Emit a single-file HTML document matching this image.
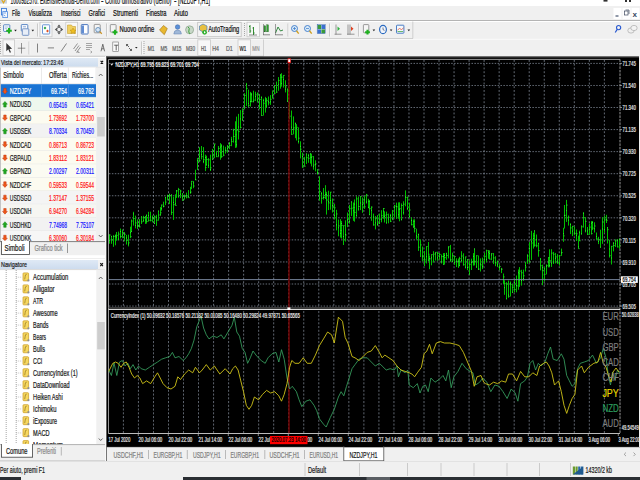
<!DOCTYPE html><html><head><meta charset="utf-8"><title>MetaTrader 4</title><style>html,body{margin:0;padding:0;width:640px;height:480px;overflow:hidden;background:#f0f0f0}svg{display:block}text{font-family:"Liberation Sans",sans-serif}</style></head><body>
<svg width="640" height="480" viewBox="0 0 640 480">
<rect x="0" y="0" width="640" height="480" fill="#f0f0f0" />
<rect x="0" y="0" width="640" height="6" fill="#ffffff" />
<rect x="0" y="0" width="7" height="3.6" fill="#c9d3e0" />
<path d="M1.8 0 l1.7 2.8 1.7 -2.8" stroke="#e0a820" stroke-width="1.2" fill="none"/>
<text x="10.5" y="3.6" font-size="10.5" fill="#151515" textLength="89" lengthAdjust="spacingAndGlyphs" stroke="#151515" stroke-width="0.22" >1000982570: ExtensiveGlobal-Demo.com</text>
<text x="101" y="3.6" font-size="10.5" fill="#151515" textLength="2.5" lengthAdjust="spacingAndGlyphs" stroke="#151515" stroke-width="0.22" >-</text>
<text x="105" y="3.6" font-size="10.5" fill="#151515" textLength="66.5" lengthAdjust="spacingAndGlyphs" stroke="#151515" stroke-width="0.22" >Conto dimostrativo (demo)</text>
<text x="174" y="3.6" font-size="10.5" fill="#151515" textLength="2.5" lengthAdjust="spacingAndGlyphs" stroke="#151515" stroke-width="0.22" >-</text>
<text x="178" y="3.6" font-size="10.5" fill="#151515" textLength="32" lengthAdjust="spacingAndGlyphs" stroke="#151515" stroke-width="0.22" >[NZDJPY,H1]</text>
<rect x="603.5" y="0" width="4" height="1.6" fill="#303030" />
<rect x="625" y="0" width="2" height="2" fill="#303030" />
<rect x="629" y="0" width="2" height="2" fill="#303030" />
<rect x="0" y="6" width="640" height="14" fill="#f0f0f0" />
<rect x="1.5" y="8.4" width="5" height="6.5" fill="#eaf2fc" stroke="#3a7ad8" stroke-width="0.9"/>
<rect x="2.8" y="11.6" width="4.6" height="6" fill="#f4f8fe" stroke="#4a88e0" stroke-width="0.8"/>
<path d="M3.5 13 h2.5 M3.8 15 l1.5 1" stroke="#4a88e0" stroke-width="0.7"/>
<text x="12" y="16.3" font-size="8.2" fill="#101010" textLength="8" lengthAdjust="spacingAndGlyphs" stroke="#101010" stroke-width="0.22" >File</text>
<text x="28.5" y="16.3" font-size="8.2" fill="#101010" textLength="23.5" lengthAdjust="spacingAndGlyphs" stroke="#101010" stroke-width="0.22" >Visualizza</text>
<text x="61" y="16.3" font-size="8.2" fill="#101010" textLength="19.5" lengthAdjust="spacingAndGlyphs" stroke="#101010" stroke-width="0.22" >Inserisci</text>
<text x="88.6" y="16.3" font-size="8.2" fill="#101010" textLength="16.5" lengthAdjust="spacingAndGlyphs" stroke="#101010" stroke-width="0.22" >Grafici</text>
<text x="113" y="16.3" font-size="8.2" fill="#101010" textLength="25" lengthAdjust="spacingAndGlyphs" stroke="#101010" stroke-width="0.22" >Strumenti</text>
<text x="146" y="16.3" font-size="8.2" fill="#101010" textLength="20.5" lengthAdjust="spacingAndGlyphs" stroke="#101010" stroke-width="0.22" >Finestra</text>
<text x="174" y="16.3" font-size="8.2" fill="#101010" textLength="14" lengthAdjust="spacingAndGlyphs" stroke="#101010" stroke-width="0.22" >Aiuto</text>
<rect x="613.5" y="8" width="8" height="11" fill="#ffffff" />
<rect x="622.5" y="8" width="8" height="11" fill="#ffffff" />
<rect x="631.5" y="8" width="8" height="11" fill="#ffffff" />
<line x1="615.5" y1="16" x2="618.5" y2="16" stroke="#203050" stroke-width="1" />
<rect x="624.5" y="11" width="3.5" height="4" fill="none" stroke="#404a60" stroke-width="0.7"/>
<line x1="625.5" y1="10" x2="629" y2="10" stroke="#404a60" stroke-width="0.7" />
<line x1="629" y1="10" x2="629" y2="14" stroke="#404a60" stroke-width="0.7" />
<text x="632.8" y="16.6" font-size="8.0" fill="#203050" stroke="#203050" stroke-width="0.22" >x</text>
<line x1="0" y1="20.5" x2="640" y2="20.5" stroke="#b4b4b4" stroke-width="1" />
<line x1="0" y1="21.5" x2="640" y2="21.5" stroke="#ffffff" stroke-width="1" />
<line x1="0" y1="38.5" x2="413" y2="38.5" stroke="#c4c4c4" stroke-width="0.9" />
<line x1="0" y1="39.3" x2="640" y2="39.3" stroke="#ffffff" stroke-width="0.7" />
<line x1="412.8" y1="21.5" x2="412.8" y2="38.5" stroke="#c8c8c8" stroke-width="0.8" />
<line x1="0" y1="56.2" x2="264" y2="56.2" stroke="#c8c8c8" stroke-width="0.8" />
<line x1="263.5" y1="39.5" x2="263.5" y2="56" stroke="#c8c8c8" stroke-width="0.8" />
<rect x="0" y="23" width="1" height="1" fill="#a8a8a8" />
<rect x="0" y="25" width="1" height="1" fill="#a8a8a8" />
<rect x="0" y="27" width="1" height="1" fill="#a8a8a8" />
<rect x="0" y="29" width="1" height="1" fill="#a8a8a8" />
<rect x="0" y="31" width="1" height="1" fill="#a8a8a8" />
<rect x="0" y="33" width="1" height="1" fill="#a8a8a8" />
<rect x="0" y="35" width="1" height="1" fill="#a8a8a8" />
<rect x="3.6" y="24.8" width="6.2" height="6.6" fill="#fff" stroke="#4a7ac0" stroke-width="0.9" rx="0.6"/>
<line x1="4.8" y1="27" x2="8.6" y2="27" stroke="#7aa0d8" stroke-width="0.7" />
<line x1="4.8" y1="28.7" x2="7" y2="28.7" stroke="#7aa0d8" stroke-width="0.7" />
<path d="M6.2 30.8 h5.6 M9 28.0 v5.6" stroke="#20b020" stroke-width="2.1"/>
<path d="M14.2 29.8 h2.6 l-1.3 1.6z" fill="#202020"/>
<rect x="21.3" y="24.6" width="6.5" height="6.5" fill="#fff" stroke="#4a7ac0" stroke-width="0.9" rx="0.6"/>
<rect x="22.3" y="28.8" width="6.5" height="6.5" fill="#e8eef8" stroke="#6a8ac0" stroke-width="0.9" rx="0.6"/>
<line x1="22.8" y1="26.8" x2="26" y2="26.8" stroke="#5a80c0" stroke-width="0.7" />
<path d="M31.5 29.8 h2.6 l-1.3 1.6z" fill="#202020"/>
<line x1="37.5" y1="23.5" x2="37.5" y2="36.5" stroke="#b8b8b8" stroke-width="0.8" />
<line x1="38.3" y1="23.5" x2="38.3" y2="36.5" stroke="#ffffff" stroke-width="0.6" />
<rect x="40" y="22.2" width="12" height="14.6" fill="#f8f8f8" stroke="#c8c8c8" stroke-width="0.8"/>
<rect x="42.5" y="24.8" width="7.2" height="9.2" fill="#fff" stroke="#5a8ad0" stroke-width="0.9" rx="0.6"/>
<path d="M45 26.5 l1.4 1.5 -1.4 1.5 -1.4 -1.5z" fill="#20a040"/><path d="M47.5 29.5 l1.4 1.5 -1.4 1.5 -1.4 -1.5z" fill="#e05020"/>
<path d="M59 24.5 l-1.8 2.2 h3.6z M59 34.5 l-1.8 -2.2 h3.6z M54.8 29.5 l2.2 -1.8 v3.6z M63.2 29.5 l-2.2 -1.8 v3.6z" fill="#505050"/>
<circle cx="59" cy="29.5" r="2.2" fill="none" stroke="#606060" stroke-width="0.9"/>
<rect x="65.8" y="22.2" width="11.8" height="14.6" fill="#f8f8f8" stroke="#c8c8c8" stroke-width="0.8"/>
<path d="M67.5 25 h4 l1 1.5 h3 v7 h-8z" fill="#f0d060" stroke="#c8a030" stroke-width="0.6"/>
<path d="M73 28 l1 2 2 .2 -1.5 1.3 .5 2 -2 -1 -2 1 .5 -2 -1.5 -1.3 2 -.2z" fill="#f0c020" stroke="#b08010" stroke-width="0.4"/>
<rect x="81.3" y="24.6" width="6.8" height="9.4" fill="#ffffff" stroke="#3a6ab8" stroke-width="0.9" rx="0.6"/>
<rect x="82.2" y="25.5" width="1.6" height="7.8" fill="#3a70c8" />
<rect x="94.2" y="24.4" width="6" height="8.4" fill="#f4f4f4" stroke="#909090" stroke-width="0.9" rx="0.6"/>
<circle cx="98" cy="29.8" r="2.3" fill="#d8e8f8" stroke="#5080b0" stroke-width="0.8"/>
<line x1="99.6" y1="31.6" x2="101.8" y2="33.8" stroke="#c89020" stroke-width="1.3" />
<line x1="106.5" y1="23.5" x2="106.5" y2="36.5" stroke="#b8b8b8" stroke-width="0.8" />
<line x1="107.3" y1="23.5" x2="107.3" y2="36.5" stroke="#ffffff" stroke-width="0.6" />
<rect x="110.3" y="24.6" width="5.8" height="7.5" fill="#f4f4f4" stroke="#909090" stroke-width="0.9" rx="0.6"/>
<path d="M112.5 32.2 h5.0 M115 29.700000000000003 v5.0" stroke="#20b020" stroke-width="2.1"/>
<text x="119.5" y="32.2" font-size="8.2" fill="#101010" textLength="34.7" lengthAdjust="spacingAndGlyphs" stroke="#101010" stroke-width="0.22" >Nuovo ordine</text>
<path d="M159.5 30 l4 -4.5 3.8 3 -3 6.2z" fill="#e8b830" stroke="#a07010" stroke-width="0.6"/>
<circle cx="177.6" cy="27" r="2.3" fill="#5a90d8" stroke="#3a60a0" stroke-width="0.5"/><path d="M173.8 34 q0 -4 3.8 -4 q3.8 0 3.8 4z" fill="#a0b8d8" stroke="#6080b0" stroke-width="0.5"/>
<circle cx="189.6" cy="29.8" r="4" fill="#c8d8c8" stroke="#8aa08a" stroke-width="0.7"/><path d="M188 27 q2 1 1 3 q-1 2 1 4" stroke="#40a040" stroke-width="1" fill="none"/>
<rect x="197.7" y="22.3" width="43.5" height="14.4" fill="#f4f4f4" stroke="#c0c0c0" stroke-width="0.8"/>
<path d="M199.5 26 l3.5 -2 4 2 v4 l-4 2 -3.5 -2z" fill="#e8c040" stroke="#4a80c0" stroke-width="0.7"/>
<circle cx="204.6" cy="32.3" r="2.4" fill="#30b030"/><path d="M204 31 l1.8 1.3 -1.8 1.3z" fill="#fff"/>
<text x="208.3" y="32.2" font-size="8.2" fill="#101010" textLength="31" lengthAdjust="spacingAndGlyphs" stroke="#101010" stroke-width="0.22" >AutoTrading</text>
<rect x="244" y="23" width="1" height="1" fill="#a8a8a8" />
<rect x="244" y="25" width="1" height="1" fill="#a8a8a8" />
<rect x="244" y="27" width="1" height="1" fill="#a8a8a8" />
<rect x="244" y="29" width="1" height="1" fill="#a8a8a8" />
<rect x="244" y="31" width="1" height="1" fill="#a8a8a8" />
<rect x="244" y="33" width="1" height="1" fill="#a8a8a8" />
<rect x="244" y="35" width="1" height="1" fill="#a8a8a8" />
<rect x="247" y="22.2" width="12.4" height="14.6" fill="#f8f8f8" stroke="#c8c8c8" stroke-width="0.8"/>
<path d="M250 25 v8 M249 26.5 h1 M250 31 h1.2 M253.5 27 v8 M252.5 28 h1 M253.5 33 h1.2" stroke="#208020" stroke-width="0.9"/>
<line x1="249" y1="35" x2="257" y2="35" stroke="#606060" stroke-width="0.7" />
<rect x="264" y="25.8" width="1.6" height="6" fill="#30a030" stroke="#206020" stroke-width="0.4"/><rect x="266.8" y="24.8" width="1.6" height="7" fill="#30a030" stroke="#206020" stroke-width="0.4"/>
<line x1="263" y1="34.8" x2="270" y2="34.8" stroke="#606060" stroke-width="0.7" />
<line x1="263.5" y1="24" x2="263.5" y2="35" stroke="#606060" stroke-width="0.6" />
<path d="M275.5 33 l2.5 -6 2.5 4 2.5 -1" fill="none" stroke="#208030" stroke-width="0.9"/>
<line x1="275" y1="34.8" x2="283" y2="34.8" stroke="#606060" stroke-width="0.7" />
<line x1="275.5" y1="24" x2="275.5" y2="35" stroke="#606060" stroke-width="0.6" />
<line x1="288" y1="23.5" x2="288" y2="36.5" stroke="#b8b8b8" stroke-width="0.8" />
<line x1="288.8" y1="23.5" x2="288.8" y2="36.5" stroke="#ffffff" stroke-width="0.6" />
<circle cx="294.5" cy="28.5" r="3" fill="#d8eaf8" stroke="#3a78c8" stroke-width="0.9"/>
<line x1="296.5" y1="30.8" x2="298.7" y2="33.6" stroke="#d0a020" stroke-width="1.4" />
<line x1="293.0" y1="28.5" x2="296.0" y2="28.5" stroke="#3a78c8" stroke-width="0.7" />
<line x1="294.5" y1="27" x2="294.5" y2="30" stroke="#3a78c8" stroke-width="0.7" />
<circle cx="307.5" cy="28.5" r="3" fill="#d8eaf8" stroke="#3a78c8" stroke-width="0.9"/>
<line x1="309.5" y1="30.8" x2="311.7" y2="33.6" stroke="#d0a020" stroke-width="1.4" />
<line x1="306.0" y1="28.5" x2="309.0" y2="28.5" stroke="#3a78c8" stroke-width="0.7" />
<rect x="317.5" y="25" width="3.6" height="4" fill="#3a9a3a" />
<rect x="321.4" y="25" width="3.6" height="4" fill="#3a70d0" />
<rect x="317.5" y="29.4" width="3.6" height="4" fill="#3a70d0" />
<rect x="321.4" y="29.4" width="3.6" height="4" fill="#3a9a3a" />
<rect x="317.2" y="24.6" width="8" height="9" fill="none" stroke="#3060b0" stroke-width="0.5"/>
<line x1="329.5" y1="23.5" x2="329.5" y2="36.5" stroke="#b8b8b8" stroke-width="0.8" />
<line x1="330.3" y1="23.5" x2="330.3" y2="36.5" stroke="#ffffff" stroke-width="0.6" />
<line x1="336" y1="24.5" x2="336" y2="34.5" stroke="#707070" stroke-width="0.7" />
<line x1="334.5" y1="34.2" x2="341.5" y2="34.2" stroke="#707070" stroke-width="0.7" />
<path d="M337.5 26.5 l2.5 2.2 -2.5 2.2z" fill="#30b040"/>
<line x1="348" y1="24.5" x2="348" y2="34.5" stroke="#707070" stroke-width="0.7" />
<line x1="350" y1="24.5" x2="350" y2="34.5" stroke="#707070" stroke-width="0.7" />
<line x1="347" y1="34.2" x2="354.5" y2="34.2" stroke="#707070" stroke-width="0.7" />
<path d="M351 26.5 l2.5 2.2 -2.5 2.2z" fill="#e04020"/>
<line x1="358.5" y1="23.5" x2="358.5" y2="36.5" stroke="#b8b8b8" stroke-width="0.8" />
<line x1="359.3" y1="23.5" x2="359.3" y2="36.5" stroke="#ffffff" stroke-width="0.6" />
<rect x="363.4" y="24.6" width="5.4" height="8.2" fill="#f6f6f6" stroke="#909090" stroke-width="0.9" rx="0.6"/>
<path d="M365.1 32.2 h4.8 M367.5 29.800000000000004 v4.8" stroke="#20b020" stroke-width="2.1"/>
<path d="M372.6 29.6 h2.6 l-1.3 1.6z" fill="#202020"/>
<ellipse cx="383" cy="29.5" rx="3.4" ry="4.2" fill="#f0f4fa" stroke="#2a6ac0" stroke-width="1.2"/>
<line x1="383" y1="27.5" x2="383" y2="29.6" stroke="#203050" stroke-width="0.6" />
<line x1="383" y1="29.6" x2="384.5" y2="30.4" stroke="#203050" stroke-width="0.6" />
<path d="M389.8 29.6 h2.6 l-1.3 1.6z" fill="#202020"/>
<rect x="396.5" y="25.2" width="7.4" height="8" fill="#f4f8fc" stroke="#3a70c0" stroke-width="0.9" rx="0.6"/>
<path d="M397.5 30 l2 -1.5 2 1 2 -1.5" stroke="#e04020" stroke-width="0.7" fill="none"/><path d="M397.5 31.5 h5.5" stroke="#30a030" stroke-width="0.7"/>
<path d="M407.5 29.6 h2.6 l-1.3 1.6z" fill="#202020"/>
<circle cx="618.6" cy="27.6" r="2.1" fill="none" stroke="#2a5ad0" stroke-width="1.1"/>
<line x1="617.2" y1="29.4" x2="615.2" y2="32.5" stroke="#2a5ad0" stroke-width="1.2" />
<ellipse cx="631" cy="30.5" rx="3.2" ry="2.6" fill="#f0f0f0" stroke="#a0a0a0" stroke-width="0.6"/><ellipse cx="634" cy="28" rx="3.2" ry="2.6" fill="#f4f4f4" stroke="#a0a0a0" stroke-width="0.6"/>
<rect x="0" y="41" width="1" height="1" fill="#a8a8a8" />
<rect x="0" y="43" width="1" height="1" fill="#a8a8a8" />
<rect x="0" y="45" width="1" height="1" fill="#a8a8a8" />
<rect x="0" y="47" width="1" height="1" fill="#a8a8a8" />
<rect x="0" y="49" width="1" height="1" fill="#a8a8a8" />
<rect x="0" y="51" width="1" height="1" fill="#a8a8a8" />
<rect x="0" y="53" width="1" height="1" fill="#a8a8a8" />
<rect x="3" y="39.8" width="11.6" height="15.6" fill="#f8f8f8" stroke="#c8c8c8" stroke-width="0.8"/>
<path d="M6.3 43 v8.2 l2 -1.9 1.5 3.5 1.2 -.6 -1.5 -3.3 2.6 -.1z" fill="#353535"/>
<line x1="21.5" y1="43" x2="21.5" y2="53.5" stroke="#505050" stroke-width="0.6" />
<line x1="17.8" y1="48.2" x2="25.3" y2="48.2" stroke="#505050" stroke-width="0.6" />
<line x1="29" y1="41.5" x2="29" y2="54.5" stroke="#b8b8b8" stroke-width="0.8" />
<line x1="29.8" y1="41.5" x2="29.8" y2="54.5" stroke="#ffffff" stroke-width="0.6" />
<line x1="37.5" y1="43.6" x2="37.5" y2="52.5" stroke="#505050" stroke-width="0.7" />
<line x1="47.8" y1="47.9" x2="54" y2="47.9" stroke="#505050" stroke-width="0.7" />
<line x1="61" y1="51.5" x2="66.5" y2="43.5" stroke="#505050" stroke-width="0.7" />
<path d="M73.5 49 l4 -5.5 M75 51 l4 -5.5 M76.5 52.5 l4 -5.5" stroke="#505050" stroke-width="0.6"/><path d="M77 52 l2 0 v1" stroke="#404040" stroke-width="0.5" fill="none"/>
<path d="M86 43.5 h6 M86 45.5 h6 M86 47.5 h6 M86 49.5 h4 M90.5 51 l1.5 1 -1.5 1" stroke="#707070" stroke-width="0.6" fill="none"/>
<path d="M101 51.3 L102.8 44.2 L104.6 51.3 M101.7 48.8 h2.2" stroke="#505050" stroke-width="0.8" fill="none"/>
<rect x="112.8" y="42" width="5.8" height="9.5" fill="#fafafa" stroke="#707070" stroke-width="0.6"/>
<path d="M114.2 45.2 h4 M116.2 45.2 v5.2" stroke="#404040" stroke-width="0.8" fill="none"/>
<path d="M126.5 44.5 l2.5 2.5 M126.5 44.5 h1.6 M126.5 44.5 v1.6 M129 48 l2.5 2.5 M131.5 50.5 h-1.6 M131.5 50.5 v-1.6" stroke="#404040" stroke-width="0.8" fill="none"/>
<path d="M135 47 h2.6 l-1.3 1.6z" fill="#202020"/>
<line x1="141.5" y1="41.5" x2="141.5" y2="54.5" stroke="#b8b8b8" stroke-width="0.8" />
<line x1="142.3" y1="41.5" x2="142.3" y2="54.5" stroke="#ffffff" stroke-width="0.6" />
<rect x="143.5" y="41" width="1" height="1" fill="#a8a8a8" />
<rect x="143.5" y="43" width="1" height="1" fill="#a8a8a8" />
<rect x="143.5" y="45" width="1" height="1" fill="#a8a8a8" />
<rect x="143.5" y="47" width="1" height="1" fill="#a8a8a8" />
<rect x="143.5" y="49" width="1" height="1" fill="#a8a8a8" />
<rect x="143.5" y="51" width="1" height="1" fill="#a8a8a8" />
<rect x="143.5" y="53" width="1" height="1" fill="#a8a8a8" />
<rect x="197.8" y="39.8" width="12.6" height="15.6" fill="#f8f8f8" stroke="#c8c8c8" stroke-width="0.8"/>
<rect x="238" y="39.8" width="12.6" height="15.6" fill="#f8f8f8" stroke="#c8c8c8" stroke-width="0.8"/>
<text x="147.8" y="50.8" font-size="7.0" fill="#606060" textLength="6.8" lengthAdjust="spacingAndGlyphs" stroke="#606060" stroke-width="0.22" >M1</text>
<text x="160.5" y="50.8" font-size="7.0" fill="#606060" textLength="6.8" lengthAdjust="spacingAndGlyphs" stroke="#606060" stroke-width="0.22" >M5</text>
<text x="172.2" y="50.8" font-size="7.0" fill="#606060" textLength="9.2" lengthAdjust="spacingAndGlyphs" stroke="#606060" stroke-width="0.22" >M15</text>
<text x="185.9" y="50.8" font-size="7.0" fill="#606060" textLength="9.1" lengthAdjust="spacingAndGlyphs" stroke="#606060" stroke-width="0.22" >M30</text>
<text x="201" y="50.8" font-size="7.0" fill="#505050" textLength="5.4" lengthAdjust="spacingAndGlyphs" stroke="#505050" stroke-width="0.22" >H1</text>
<text x="212.3" y="50.8" font-size="7.0" fill="#606060" textLength="6.7" lengthAdjust="spacingAndGlyphs" stroke="#606060" stroke-width="0.22" >H4</text>
<text x="226" y="50.8" font-size="7.0" fill="#606060" textLength="6.8" lengthAdjust="spacingAndGlyphs" stroke="#606060" stroke-width="0.22" >D1</text>
<text x="239.6" y="50.8" font-size="7.0" fill="#202020" textLength="6.8" lengthAdjust="spacingAndGlyphs" stroke="#202020" stroke-width="0.22" >W1</text>
<text x="252.3" y="50.8" font-size="7.0" fill="#909090" textLength="7.2" lengthAdjust="spacingAndGlyphs" stroke="#909090" stroke-width="0.22" >MN</text>
<rect x="0" y="57" width="106" height="204" fill="#ffffff" />
<defs><linearGradient id="tb" x1="0" y1="0" x2="0" y2="1"><stop offset="0" stop-color="#dfe9f5"/><stop offset="1" stop-color="#cddcee"/></linearGradient></defs>
<rect x="0" y="56" width="106" height="1" fill="#b8b8b8" />
<rect x="0" y="56.6" width="106" height="1.4" fill="#ffffff" />
<rect x="0" y="58" width="98" height="8.7" fill="url(#tb)" />
<rect x="98" y="58" width="7" height="8.7" fill="#f2f2f2" />
<path d="M100.6 60.9 l2.5 2.6 M103.1 60.9 l-2.5 2.6" stroke="#101010" stroke-width="1.1"/>
<line x1="0" y1="67.3" x2="105" y2="67.3" stroke="#d0d0d0" stroke-width="0.8" />
<text x="1" y="65.2" font-size="8.0" fill="#202020" textLength="62.3" lengthAdjust="spacingAndGlyphs" stroke="#202020" stroke-width="0.22" >Vista del mercato: 17:23:46</text>
<rect x="0" y="67.4" width="96" height="16.6" fill="#ffffff" />
<line x1="41.5" y1="67.5" x2="41.5" y2="241" stroke="#e4e4e4" stroke-width="0.8" />
<line x1="68.4" y1="67.5" x2="68.4" y2="241" stroke="#e4e4e4" stroke-width="0.8" />
<line x1="96" y1="67.5" x2="96" y2="241" stroke="#e4e4e4" stroke-width="0.8" />
<line x1="0" y1="83.8" x2="96" y2="83.8" stroke="#e0e0e0" stroke-width="0.7" />
<text x="3.2" y="78.2" font-size="8.2" fill="#202020" textLength="20.5" lengthAdjust="spacingAndGlyphs" stroke="#202020" stroke-width="0.22" >Simbolo</text>
<text x="66.6" y="78.2" font-size="8.2" fill="#202020" textLength="17.5" lengthAdjust="spacingAndGlyphs" text-anchor="end" stroke="#202020" stroke-width="0.22" >Offerta</text>
<text x="72" y="78.2" font-size="8.2" fill="#202020" textLength="21.3" lengthAdjust="spacingAndGlyphs" stroke="#202020" stroke-width="0.22" >Richies...</text>
<clipPath id="mwclip"><rect x="0" y="84" width="96" height="157.2"/></clipPath><g clip-path="url(#mwclip)">
<rect x="0" y="84.2" width="96" height="13.36" fill="#1a74d4" />
<line x1="0" y1="97.4" x2="96" y2="97.4" stroke="#e2e2e2" stroke-width="0.7" />
<line x1="41.5" y1="84.2" x2="41.5" y2="97.56" stroke="#4a90e0" stroke-width="0.8" />
<line x1="68.4" y1="84.2" x2="68.4" y2="97.56" stroke="#4a90e0" stroke-width="0.8" />
<path d="M4.95 93.9 l2.4 -2.7 h-1.2 v-2.9 h-2.4 v2.9 h-1.2z" fill="#ee5a18" stroke="#c03010" stroke-width="0.5" stroke-linejoin="round"/>
<text x="9.8" y="94.10000000000001" font-size="8.4" fill="#ffffff" textLength="21.5" lengthAdjust="spacingAndGlyphs" stroke="#ffffff" stroke-width="0.22" >NZDJPY</text>
<text x="67" y="94.2" font-size="8.4" fill="#ffffff" textLength="16" lengthAdjust="spacingAndGlyphs" text-anchor="end" stroke="#ffffff" stroke-width="0.22" >69.754</text>
<text x="94" y="94.2" font-size="8.4" fill="#ffffff" textLength="16" lengthAdjust="spacingAndGlyphs" text-anchor="end" stroke="#ffffff" stroke-width="0.22" >69.762</text>
<rect x="0" y="97.56" width="96" height="13.36" fill="#eef8ee" />
<line x1="0" y1="110.76" x2="96" y2="110.76" stroke="#e2e2e2" stroke-width="0.7" />
<path d="M4.95 101.46 l2.4 2.7 h-1.2 v2.9 h-2.4 v-2.9 h-1.2z" fill="#22a822" stroke="#108010" stroke-width="0.5" stroke-linejoin="round"/>
<text x="9.8" y="107.46000000000001" font-size="8.4" fill="#202020" textLength="21.5" lengthAdjust="spacingAndGlyphs" stroke="#202020" stroke-width="0.22" >NZDUSD</text>
<text x="67" y="107.56" font-size="8.4" fill="#1818ff" textLength="18" lengthAdjust="spacingAndGlyphs" text-anchor="end" stroke="#1818ff" stroke-width="0.22" >0.65416</text>
<text x="94" y="107.56" font-size="8.4" fill="#1818ff" textLength="18" lengthAdjust="spacingAndGlyphs" text-anchor="end" stroke="#1818ff" stroke-width="0.22" >0.65421</text>
<rect x="0" y="110.92" width="96" height="13.36" fill="#fcfbf0" />
<line x1="0" y1="124.12" x2="96" y2="124.12" stroke="#e2e2e2" stroke-width="0.7" />
<path d="M4.95 120.62 l2.4 -2.7 h-1.2 v-2.9 h-2.4 v2.9 h-1.2z" fill="#ee5a18" stroke="#c03010" stroke-width="0.5" stroke-linejoin="round"/>
<text x="9.8" y="120.82000000000001" font-size="8.4" fill="#202020" textLength="21.5" lengthAdjust="spacingAndGlyphs" stroke="#202020" stroke-width="0.22" >GBPCAD</text>
<text x="67" y="120.92" font-size="8.4" fill="#ff1818" textLength="18" lengthAdjust="spacingAndGlyphs" text-anchor="end" stroke="#ff1818" stroke-width="0.22" >1.73692</text>
<text x="94" y="120.92" font-size="8.4" fill="#ff1818" textLength="18" lengthAdjust="spacingAndGlyphs" text-anchor="end" stroke="#ff1818" stroke-width="0.22" >1.73700</text>
<rect x="0" y="124.28" width="96" height="13.36" fill="#f2f2f2" />
<line x1="0" y1="137.48" x2="96" y2="137.48" stroke="#e2e2e2" stroke-width="0.7" />
<path d="M4.95 128.18 l2.4 2.7 h-1.2 v2.9 h-2.4 v-2.9 h-1.2z" fill="#22a822" stroke="#108010" stroke-width="0.5" stroke-linejoin="round"/>
<text x="9.8" y="134.18" font-size="8.4" fill="#202020" textLength="21.5" lengthAdjust="spacingAndGlyphs" stroke="#202020" stroke-width="0.22" >USDSEK</text>
<text x="67" y="134.28" font-size="8.4" fill="#1818ff" textLength="18" lengthAdjust="spacingAndGlyphs" text-anchor="end" stroke="#1818ff" stroke-width="0.22" >8.70334</text>
<text x="94" y="134.28" font-size="8.4" fill="#1818ff" textLength="18" lengthAdjust="spacingAndGlyphs" text-anchor="end" stroke="#1818ff" stroke-width="0.22" >8.70450</text>
<rect x="0" y="137.64" width="96" height="13.36" fill="#fcfbf0" />
<line x1="0" y1="150.83999999999997" x2="96" y2="150.83999999999997" stroke="#e2e2e2" stroke-width="0.7" />
<path d="M4.95 147.34 l2.4 -2.7 h-1.2 v-2.9 h-2.4 v2.9 h-1.2z" fill="#ee5a18" stroke="#c03010" stroke-width="0.5" stroke-linejoin="round"/>
<text x="9.8" y="147.54" font-size="8.4" fill="#202020" textLength="21.5" lengthAdjust="spacingAndGlyphs" stroke="#202020" stroke-width="0.22" >NZDCAD</text>
<text x="67" y="147.64" font-size="8.4" fill="#ff1818" textLength="18" lengthAdjust="spacingAndGlyphs" text-anchor="end" stroke="#ff1818" stroke-width="0.22" >0.86713</text>
<text x="94" y="147.64" font-size="8.4" fill="#ff1818" textLength="18" lengthAdjust="spacingAndGlyphs" text-anchor="end" stroke="#ff1818" stroke-width="0.22" >0.86723</text>
<rect x="0" y="151.0" width="96" height="13.36" fill="#fcfbf0" />
<line x1="0" y1="164.2" x2="96" y2="164.2" stroke="#e2e2e2" stroke-width="0.7" />
<path d="M4.95 160.70000000000002 l2.4 -2.7 h-1.2 v-2.9 h-2.4 v2.9 h-1.2z" fill="#ee5a18" stroke="#c03010" stroke-width="0.5" stroke-linejoin="round"/>
<text x="9.8" y="160.9" font-size="8.4" fill="#202020" textLength="21.5" lengthAdjust="spacingAndGlyphs" stroke="#202020" stroke-width="0.22" >GBPAUD</text>
<text x="67" y="161.0" font-size="8.4" fill="#ff1818" textLength="18" lengthAdjust="spacingAndGlyphs" text-anchor="end" stroke="#ff1818" stroke-width="0.22" >1.83112</text>
<text x="94" y="161.0" font-size="8.4" fill="#ff1818" textLength="18" lengthAdjust="spacingAndGlyphs" text-anchor="end" stroke="#ff1818" stroke-width="0.22" >1.83121</text>
<rect x="0" y="164.36" width="96" height="13.36" fill="#fbfbf2" />
<line x1="0" y1="177.56" x2="96" y2="177.56" stroke="#e2e2e2" stroke-width="0.7" />
<path d="M4.95 168.26000000000002 l2.4 2.7 h-1.2 v2.9 h-2.4 v-2.9 h-1.2z" fill="#22a822" stroke="#108010" stroke-width="0.5" stroke-linejoin="round"/>
<text x="9.8" y="174.26000000000002" font-size="8.4" fill="#202020" textLength="21.5" lengthAdjust="spacingAndGlyphs" stroke="#202020" stroke-width="0.22" >GBPNZD</text>
<text x="67" y="174.36" font-size="8.4" fill="#1818ff" textLength="18" lengthAdjust="spacingAndGlyphs" text-anchor="end" stroke="#1818ff" stroke-width="0.22" >2.00297</text>
<text x="94" y="174.36" font-size="8.4" fill="#1818ff" textLength="18" lengthAdjust="spacingAndGlyphs" text-anchor="end" stroke="#1818ff" stroke-width="0.22" >2.00311</text>
<rect x="0" y="177.72" width="96" height="13.36" fill="#fcfbf0" />
<line x1="0" y1="190.92" x2="96" y2="190.92" stroke="#e2e2e2" stroke-width="0.7" />
<path d="M4.95 187.42000000000002 l2.4 -2.7 h-1.2 v-2.9 h-2.4 v2.9 h-1.2z" fill="#ee5a18" stroke="#c03010" stroke-width="0.5" stroke-linejoin="round"/>
<text x="9.8" y="187.62" font-size="8.4" fill="#202020" textLength="21.5" lengthAdjust="spacingAndGlyphs" stroke="#202020" stroke-width="0.22" >NZDCHF</text>
<text x="67" y="187.72" font-size="8.4" fill="#ff1818" textLength="18" lengthAdjust="spacingAndGlyphs" text-anchor="end" stroke="#ff1818" stroke-width="0.22" >0.59533</text>
<text x="94" y="187.72" font-size="8.4" fill="#ff1818" textLength="18" lengthAdjust="spacingAndGlyphs" text-anchor="end" stroke="#ff1818" stroke-width="0.22" >0.59544</text>
<rect x="0" y="191.07999999999998" width="96" height="13.36" fill="#f4f4f4" />
<line x1="0" y1="204.27999999999997" x2="96" y2="204.27999999999997" stroke="#e2e2e2" stroke-width="0.7" />
<path d="M4.95 200.78 l2.4 -2.7 h-1.2 v-2.9 h-2.4 v2.9 h-1.2z" fill="#ee5a18" stroke="#c03010" stroke-width="0.5" stroke-linejoin="round"/>
<text x="9.8" y="200.98" font-size="8.4" fill="#202020" textLength="21.5" lengthAdjust="spacingAndGlyphs" stroke="#202020" stroke-width="0.22" >USDSGD</text>
<text x="67" y="201.07999999999998" font-size="8.4" fill="#ff1818" textLength="18" lengthAdjust="spacingAndGlyphs" text-anchor="end" stroke="#ff1818" stroke-width="0.22" >1.37147</text>
<text x="94" y="201.07999999999998" font-size="8.4" fill="#ff1818" textLength="18" lengthAdjust="spacingAndGlyphs" text-anchor="end" stroke="#ff1818" stroke-width="0.22" >1.37155</text>
<rect x="0" y="204.44" width="96" height="13.36" fill="#f6f6f2" />
<line x1="0" y1="217.64" x2="96" y2="217.64" stroke="#e2e2e2" stroke-width="0.7" />
<path d="M4.95 214.14000000000001 l2.4 -2.7 h-1.2 v-2.9 h-2.4 v2.9 h-1.2z" fill="#ee5a18" stroke="#c03010" stroke-width="0.5" stroke-linejoin="round"/>
<text x="9.8" y="214.34" font-size="8.4" fill="#202020" textLength="21.5" lengthAdjust="spacingAndGlyphs" stroke="#202020" stroke-width="0.22" >USDCNH</text>
<text x="67" y="214.44" font-size="8.4" fill="#ff1818" textLength="18" lengthAdjust="spacingAndGlyphs" text-anchor="end" stroke="#ff1818" stroke-width="0.22" >6.94270</text>
<text x="94" y="214.44" font-size="8.4" fill="#ff1818" textLength="18" lengthAdjust="spacingAndGlyphs" text-anchor="end" stroke="#ff1818" stroke-width="0.22" >6.94284</text>
<rect x="0" y="217.8" width="96" height="13.36" fill="#f2f2f2" />
<line x1="0" y1="231.0" x2="96" y2="231.0" stroke="#e2e2e2" stroke-width="0.7" />
<path d="M4.95 221.70000000000002 l2.4 2.7 h-1.2 v2.9 h-2.4 v-2.9 h-1.2z" fill="#22a822" stroke="#108010" stroke-width="0.5" stroke-linejoin="round"/>
<text x="9.8" y="227.70000000000002" font-size="8.4" fill="#202020" textLength="21.5" lengthAdjust="spacingAndGlyphs" stroke="#202020" stroke-width="0.22" >USDHKD</text>
<text x="67" y="227.8" font-size="8.4" fill="#1818ff" textLength="18" lengthAdjust="spacingAndGlyphs" text-anchor="end" stroke="#1818ff" stroke-width="0.22" >7.74968</text>
<text x="94" y="227.8" font-size="8.4" fill="#1818ff" textLength="18" lengthAdjust="spacingAndGlyphs" text-anchor="end" stroke="#1818ff" stroke-width="0.22" >7.75107</text>
<rect x="0" y="231.15999999999997" width="96" height="13.36" fill="#f6f6f6" />
<line x1="0" y1="244.35999999999996" x2="96" y2="244.35999999999996" stroke="#e2e2e2" stroke-width="0.7" />
<path d="M4.95 240.85999999999999 l2.4 -2.7 h-1.2 v-2.9 h-2.4 v2.9 h-1.2z" fill="#ee5a18" stroke="#c03010" stroke-width="0.5" stroke-linejoin="round"/>
<text x="9.8" y="241.05999999999997" font-size="8.4" fill="#202020" textLength="21.5" lengthAdjust="spacingAndGlyphs" stroke="#202020" stroke-width="0.22" >USDDKK</text>
<text x="67" y="241.15999999999997" font-size="8.4" fill="#ff1818" textLength="18" lengthAdjust="spacingAndGlyphs" text-anchor="end" stroke="#ff1818" stroke-width="0.22" >6.30060</text>
<text x="94" y="241.15999999999997" font-size="8.4" fill="#ff1818" textLength="18" lengthAdjust="spacingAndGlyphs" text-anchor="end" stroke="#ff1818" stroke-width="0.22" >6.30184</text>
</g>
<rect x="0" y="67.5" width="0.9" height="174" fill="#c0c0c0" />
<rect x="96.3" y="67.5" width="9.2" height="173.7" fill="#f0f0f0" />
<path d="M98.8 76 l1.9 -2 1.9 2" fill="none" stroke="#404040" stroke-width="0.8"/>
<rect x="97.2" y="117" width="7.6" height="19.5" fill="#cdcdcd" />
<path d="M98.8 235 l1.9 2 1.9 -2" fill="none" stroke="#404040" stroke-width="0.8"/>
<rect x="0" y="241.2" width="106" height="14" fill="#f0f0f0" />
<line x1="0" y1="241.6" x2="105" y2="241.6" stroke="#808080" stroke-width="1" />
<rect x="1.4" y="241.4" width="28" height="13" fill="#ffffff" stroke="#404040" stroke-width="0.8"/>
<rect x="1.8" y="240.8" width="27.2" height="1.4" fill="#ffffff" />
<text x="4.6" y="251.4" font-size="8.2" fill="#202020" textLength="20" lengthAdjust="spacingAndGlyphs" stroke="#202020" stroke-width="0.22" >Simboli</text>
<text x="34.4" y="251.4" font-size="8.2" fill="#8a8a8a" textLength="28.3" lengthAdjust="spacingAndGlyphs" stroke="#8a8a8a" stroke-width="0.22" >Grafico tick</text>
<line x1="67.5" y1="243.5" x2="67.5" y2="253" stroke="#808080" stroke-width="0.8" />
<line x1="0" y1="258.5" x2="106" y2="258.5" stroke="#c8c8c8" stroke-width="0.8" />
<rect x="0" y="258.4" width="106" height="1.6" fill="#ffffff" />
<rect x="0" y="260" width="98" height="9" fill="url(#tb)" />
<rect x="98" y="260" width="7" height="9" fill="#f2f2f2" />
<path d="M100.3 263.2 l2.6 3 M102.9 263.2 l-2.6 3" stroke="#101010" stroke-width="1.1"/>
<line x1="0" y1="269.7" x2="105" y2="269.7" stroke="#d8d8d8" stroke-width="1" />
<text x="1" y="267.4" font-size="8.0" fill="#202020" textLength="26" lengthAdjust="spacingAndGlyphs" stroke="#202020" stroke-width="0.22" >Navigatore</text>
<rect x="0" y="270.2" width="105" height="174.3" fill="#ffffff" />
<path d="M6.2 270 v175 M16.2 270 v175" stroke="#909090" stroke-width="0.8" stroke-dasharray="1 1"/>
<clipPath id="navclip"><rect x="0" y="269.5" width="96" height="175"/></clipPath><g clip-path="url(#navclip)">
<path d="M16.2 277.2 h5" stroke="#a0a0a0" stroke-width="0.6" stroke-dasharray="1 1"/>
<rect x="23" y="272.9" width="5.6" height="8" rx="0.8" fill="#f6d860" stroke="#c89820" stroke-width="0.7"/>
<path d="M26.7 274.4 q-1.8 0 -1.5 2 l-.5 3" stroke="#806010" stroke-width="0.6" fill="none"/><circle cx="28.4" cy="280.4" r="1.1" fill="#909090"/>
<text x="33.1" y="280.09999999999997" font-size="8.2" fill="#202020" textLength="35.3" lengthAdjust="spacingAndGlyphs" stroke="#202020" stroke-width="0.22" >Accumulation</text>
<path d="M16.2 289.18 h5" stroke="#a0a0a0" stroke-width="0.6" stroke-dasharray="1 1"/>
<rect x="23" y="284.88" width="5.6" height="8" rx="0.8" fill="#f6d860" stroke="#c89820" stroke-width="0.7"/>
<path d="M26.7 286.38 q-1.8 0 -1.5 2 l-.5 3" stroke="#806010" stroke-width="0.6" fill="none"/><circle cx="28.4" cy="292.38" r="1.1" fill="#909090"/>
<text x="33.1" y="292.08" font-size="8.2" fill="#202020" textLength="21.5" lengthAdjust="spacingAndGlyphs" stroke="#202020" stroke-width="0.22" >Alligator</text>
<path d="M16.2 301.15999999999997 h5" stroke="#a0a0a0" stroke-width="0.6" stroke-dasharray="1 1"/>
<rect x="23" y="296.85999999999996" width="5.6" height="8" rx="0.8" fill="#f6d860" stroke="#c89820" stroke-width="0.7"/>
<path d="M26.7 298.35999999999996 q-1.8 0 -1.5 2 l-.5 3" stroke="#806010" stroke-width="0.6" fill="none"/><circle cx="28.4" cy="304.35999999999996" r="1.1" fill="#909090"/>
<text x="33.1" y="304.05999999999995" font-size="8.2" fill="#202020" textLength="10" lengthAdjust="spacingAndGlyphs" stroke="#202020" stroke-width="0.22" >ATR</text>
<path d="M16.2 313.14 h5" stroke="#a0a0a0" stroke-width="0.6" stroke-dasharray="1 1"/>
<rect x="23" y="308.84" width="5.6" height="8" rx="0.8" fill="#f6d860" stroke="#c89820" stroke-width="0.7"/>
<path d="M26.7 310.34 q-1.8 0 -1.5 2 l-.5 3" stroke="#806010" stroke-width="0.6" fill="none"/><circle cx="28.4" cy="316.34" r="1.1" fill="#909090"/>
<text x="33.1" y="316.03999999999996" font-size="8.2" fill="#202020" textLength="24.5" lengthAdjust="spacingAndGlyphs" stroke="#202020" stroke-width="0.22" >Awesome</text>
<path d="M16.2 325.12 h5" stroke="#a0a0a0" stroke-width="0.6" stroke-dasharray="1 1"/>
<rect x="23" y="320.82" width="5.6" height="8" rx="0.8" fill="#f6d860" stroke="#c89820" stroke-width="0.7"/>
<path d="M26.7 322.32 q-1.8 0 -1.5 2 l-.5 3" stroke="#806010" stroke-width="0.6" fill="none"/><circle cx="28.4" cy="328.32" r="1.1" fill="#909090"/>
<text x="33.1" y="328.02" font-size="8.2" fill="#202020" textLength="15.4" lengthAdjust="spacingAndGlyphs" stroke="#202020" stroke-width="0.22" >Bands</text>
<path d="M16.2 337.1 h5" stroke="#a0a0a0" stroke-width="0.6" stroke-dasharray="1 1"/>
<rect x="23" y="332.8" width="5.6" height="8" rx="0.8" fill="#f6d860" stroke="#c89820" stroke-width="0.7"/>
<path d="M26.7 334.3 q-1.8 0 -1.5 2 l-.5 3" stroke="#806010" stroke-width="0.6" fill="none"/><circle cx="28.4" cy="340.3" r="1.1" fill="#909090"/>
<text x="33.1" y="340.0" font-size="8.2" fill="#202020" textLength="13" lengthAdjust="spacingAndGlyphs" stroke="#202020" stroke-width="0.22" >Bears</text>
<path d="M16.2 349.08 h5" stroke="#a0a0a0" stroke-width="0.6" stroke-dasharray="1 1"/>
<rect x="23" y="344.78" width="5.6" height="8" rx="0.8" fill="#f6d860" stroke="#c89820" stroke-width="0.7"/>
<path d="M26.7 346.28 q-1.8 0 -1.5 2 l-.5 3" stroke="#806010" stroke-width="0.6" fill="none"/><circle cx="28.4" cy="352.28" r="1.1" fill="#909090"/>
<text x="33.1" y="351.97999999999996" font-size="8.2" fill="#202020" textLength="12" lengthAdjust="spacingAndGlyphs" stroke="#202020" stroke-width="0.22" >Bulls</text>
<path d="M16.2 361.06 h5" stroke="#a0a0a0" stroke-width="0.6" stroke-dasharray="1 1"/>
<rect x="23" y="356.76" width="5.6" height="8" rx="0.8" fill="#f6d860" stroke="#c89820" stroke-width="0.7"/>
<path d="M26.7 358.26 q-1.8 0 -1.5 2 l-.5 3" stroke="#806010" stroke-width="0.6" fill="none"/><circle cx="28.4" cy="364.26" r="1.1" fill="#909090"/>
<text x="33.1" y="363.96" font-size="8.2" fill="#202020" textLength="9.2" lengthAdjust="spacingAndGlyphs" stroke="#202020" stroke-width="0.22" >CCI</text>
<path d="M16.2 373.03999999999996 h5" stroke="#a0a0a0" stroke-width="0.6" stroke-dasharray="1 1"/>
<rect x="23" y="368.73999999999995" width="5.6" height="8" rx="0.8" fill="#f6d860" stroke="#c89820" stroke-width="0.7"/>
<path d="M26.7 370.23999999999995 q-1.8 0 -1.5 2 l-.5 3" stroke="#806010" stroke-width="0.6" fill="none"/><circle cx="28.4" cy="376.23999999999995" r="1.1" fill="#909090"/>
<text x="33.1" y="375.93999999999994" font-size="8.2" fill="#202020" textLength="44.5" lengthAdjust="spacingAndGlyphs" stroke="#202020" stroke-width="0.22" >CurrencyIndex (1)</text>
<path d="M16.2 385.02 h5" stroke="#a0a0a0" stroke-width="0.6" stroke-dasharray="1 1"/>
<rect x="23" y="380.71999999999997" width="5.6" height="8" rx="0.8" fill="#f6d860" stroke="#c89820" stroke-width="0.7"/>
<path d="M26.7 382.21999999999997 q-1.8 0 -1.5 2 l-.5 3" stroke="#806010" stroke-width="0.6" fill="none"/><circle cx="28.4" cy="388.21999999999997" r="1.1" fill="#909090"/>
<text x="33.1" y="387.91999999999996" font-size="8.2" fill="#202020" textLength="36.5" lengthAdjust="spacingAndGlyphs" stroke="#202020" stroke-width="0.22" >DataDownload</text>
<path d="M16.2 397.0 h5" stroke="#a0a0a0" stroke-width="0.6" stroke-dasharray="1 1"/>
<rect x="23" y="392.7" width="5.6" height="8" rx="0.8" fill="#f6d860" stroke="#c89820" stroke-width="0.7"/>
<path d="M26.7 394.2 q-1.8 0 -1.5 2 l-.5 3" stroke="#806010" stroke-width="0.6" fill="none"/><circle cx="28.4" cy="400.2" r="1.1" fill="#909090"/>
<text x="33.1" y="399.9" font-size="8.2" fill="#202020" textLength="29.6" lengthAdjust="spacingAndGlyphs" stroke="#202020" stroke-width="0.22" >Heiken Ashi</text>
<path d="M16.2 408.98 h5" stroke="#a0a0a0" stroke-width="0.6" stroke-dasharray="1 1"/>
<rect x="23" y="404.68" width="5.6" height="8" rx="0.8" fill="#f6d860" stroke="#c89820" stroke-width="0.7"/>
<path d="M26.7 406.18 q-1.8 0 -1.5 2 l-.5 3" stroke="#806010" stroke-width="0.6" fill="none"/><circle cx="28.4" cy="412.18" r="1.1" fill="#909090"/>
<text x="33.1" y="411.88" font-size="8.2" fill="#202020" textLength="23.4" lengthAdjust="spacingAndGlyphs" stroke="#202020" stroke-width="0.22" >Ichimoku</text>
<path d="M16.2 420.96 h5" stroke="#a0a0a0" stroke-width="0.6" stroke-dasharray="1 1"/>
<rect x="23" y="416.65999999999997" width="5.6" height="8" rx="0.8" fill="#f6d860" stroke="#c89820" stroke-width="0.7"/>
<path d="M26.7 418.15999999999997 q-1.8 0 -1.5 2 l-.5 3" stroke="#806010" stroke-width="0.6" fill="none"/><circle cx="28.4" cy="424.15999999999997" r="1.1" fill="#909090"/>
<text x="33.1" y="423.85999999999996" font-size="8.2" fill="#202020" textLength="24" lengthAdjust="spacingAndGlyphs" stroke="#202020" stroke-width="0.22" >iExposure</text>
<path d="M16.2 432.94 h5" stroke="#a0a0a0" stroke-width="0.6" stroke-dasharray="1 1"/>
<rect x="23" y="428.64" width="5.6" height="8" rx="0.8" fill="#f6d860" stroke="#c89820" stroke-width="0.7"/>
<path d="M26.7 430.14 q-1.8 0 -1.5 2 l-.5 3" stroke="#806010" stroke-width="0.6" fill="none"/><circle cx="28.4" cy="436.14" r="1.1" fill="#909090"/>
<text x="33.1" y="435.84" font-size="8.2" fill="#202020" textLength="16.5" lengthAdjust="spacingAndGlyphs" stroke="#202020" stroke-width="0.22" >MACD</text>
<path d="M16.2 444.91999999999996 h5" stroke="#a0a0a0" stroke-width="0.6" stroke-dasharray="1 1"/>
<rect x="23" y="440.61999999999995" width="5.6" height="8" rx="0.8" fill="#f6d860" stroke="#c89820" stroke-width="0.7"/>
<path d="M26.7 442.11999999999995 q-1.8 0 -1.5 2 l-.5 3" stroke="#806010" stroke-width="0.6" fill="none"/><circle cx="28.4" cy="448.11999999999995" r="1.1" fill="#909090"/>
<text x="33.1" y="447.81999999999994" font-size="8.2" fill="#202020" textLength="30" lengthAdjust="spacingAndGlyphs" stroke="#202020" stroke-width="0.22" >Momentum</text>
</g>
<rect x="96.3" y="269.6" width="9.2" height="175" fill="#f0f0f0" />
<path d="M98.8 279 l1.9 -2 1.9 2" fill="none" stroke="#404040" stroke-width="0.8"/>
<rect x="97.2" y="322" width="7.6" height="27.4" fill="#cdcdcd" />
<path d="M98.8 438.5 l1.9 2 1.9 -2" fill="none" stroke="#404040" stroke-width="0.8"/>
<rect x="0" y="444.5" width="105.5" height="16.3" fill="#f0f0f0" />
<line x1="0" y1="444.6" x2="105.5" y2="444.6" stroke="#a0a0a0" stroke-width="0.8" />
<rect x="1.4" y="444.4" width="31.2" height="12.8" fill="#ffffff" stroke="#404040" stroke-width="0.8"/>
<rect x="1.8" y="443.9" width="30.4" height="1.2" fill="#ffffff" />
<text x="6" y="454" font-size="8.2" fill="#202020" textLength="21.5" lengthAdjust="spacingAndGlyphs" stroke="#202020" stroke-width="0.22" >Comune</text>
<text x="37" y="454" font-size="8.2" fill="#8a8a8a" textLength="19" lengthAdjust="spacingAndGlyphs" stroke="#8a8a8a" stroke-width="0.22" >Preferiti</text>
<line x1="61.3" y1="447" x2="61.3" y2="455.5" stroke="#909090" stroke-width="0.6" />
<line x1="0" y1="460.8" x2="106" y2="460.8" stroke="#c0c0c0" stroke-width="0.8" />
<rect x="105" y="56" width="1.5" height="405" fill="#f8f8f8" />
<rect x="106.3" y="56" width="0.9" height="405" fill="#404040" />
<rect x="106.8" y="57" width="532.2" height="390" fill="#000000" />
<rect x="639" y="57" width="1" height="390" fill="#f0f0f0" />
<rect x="106.8" y="56.3" width="532.2" height="1.4" fill="#3a3a3a" />
<line x1="123.40" y1="60" x2="123.40" y2="307" stroke="#a0acbc" stroke-width="0.9" stroke-dasharray="1.9 1.85" opacity="0.7"/>
<line x1="138.43" y1="60" x2="138.43" y2="307" stroke="#a0acbc" stroke-width="0.9" stroke-dasharray="1.9 1.85" opacity="0.7"/>
<line x1="153.46" y1="60" x2="153.46" y2="307" stroke="#a0acbc" stroke-width="0.9" stroke-dasharray="1.9 1.85" opacity="0.7"/>
<line x1="168.49" y1="60" x2="168.49" y2="307" stroke="#a0acbc" stroke-width="0.9" stroke-dasharray="1.9 1.85" opacity="0.7"/>
<line x1="183.52" y1="60" x2="183.52" y2="307" stroke="#a0acbc" stroke-width="0.9" stroke-dasharray="1.9 1.85" opacity="0.7"/>
<line x1="198.55" y1="60" x2="198.55" y2="307" stroke="#a0acbc" stroke-width="0.9" stroke-dasharray="1.9 1.85" opacity="0.7"/>
<line x1="213.58" y1="60" x2="213.58" y2="307" stroke="#a0acbc" stroke-width="0.9" stroke-dasharray="1.9 1.85" opacity="0.7"/>
<line x1="228.61" y1="60" x2="228.61" y2="307" stroke="#a0acbc" stroke-width="0.9" stroke-dasharray="1.9 1.85" opacity="0.7"/>
<line x1="243.64" y1="60" x2="243.64" y2="307" stroke="#a0acbc" stroke-width="0.9" stroke-dasharray="1.9 1.85" opacity="0.7"/>
<line x1="258.67" y1="60" x2="258.67" y2="307" stroke="#a0acbc" stroke-width="0.9" stroke-dasharray="1.9 1.85" opacity="0.7"/>
<line x1="273.70" y1="60" x2="273.70" y2="307" stroke="#a0acbc" stroke-width="0.9" stroke-dasharray="1.9 1.85" opacity="0.7"/>
<line x1="288.73" y1="60" x2="288.73" y2="307" stroke="#a0acbc" stroke-width="0.9" stroke-dasharray="1.9 1.85" opacity="0.7"/>
<line x1="303.76" y1="60" x2="303.76" y2="307" stroke="#a0acbc" stroke-width="0.9" stroke-dasharray="1.9 1.85" opacity="0.7"/>
<line x1="318.79" y1="60" x2="318.79" y2="307" stroke="#a0acbc" stroke-width="0.9" stroke-dasharray="1.9 1.85" opacity="0.7"/>
<line x1="333.82" y1="60" x2="333.82" y2="307" stroke="#a0acbc" stroke-width="0.9" stroke-dasharray="1.9 1.85" opacity="0.7"/>
<line x1="348.85" y1="60" x2="348.85" y2="307" stroke="#a0acbc" stroke-width="0.9" stroke-dasharray="1.9 1.85" opacity="0.7"/>
<line x1="363.88" y1="60" x2="363.88" y2="307" stroke="#a0acbc" stroke-width="0.9" stroke-dasharray="1.9 1.85" opacity="0.7"/>
<line x1="378.91" y1="60" x2="378.91" y2="307" stroke="#a0acbc" stroke-width="0.9" stroke-dasharray="1.9 1.85" opacity="0.7"/>
<line x1="393.94" y1="60" x2="393.94" y2="307" stroke="#a0acbc" stroke-width="0.9" stroke-dasharray="1.9 1.85" opacity="0.7"/>
<line x1="408.97" y1="60" x2="408.97" y2="307" stroke="#a0acbc" stroke-width="0.9" stroke-dasharray="1.9 1.85" opacity="0.7"/>
<line x1="424.00" y1="60" x2="424.00" y2="307" stroke="#a0acbc" stroke-width="0.9" stroke-dasharray="1.9 1.85" opacity="0.7"/>
<line x1="439.03" y1="60" x2="439.03" y2="307" stroke="#a0acbc" stroke-width="0.9" stroke-dasharray="1.9 1.85" opacity="0.7"/>
<line x1="454.06" y1="60" x2="454.06" y2="307" stroke="#a0acbc" stroke-width="0.9" stroke-dasharray="1.9 1.85" opacity="0.7"/>
<line x1="469.09" y1="60" x2="469.09" y2="307" stroke="#a0acbc" stroke-width="0.9" stroke-dasharray="1.9 1.85" opacity="0.7"/>
<line x1="484.12" y1="60" x2="484.12" y2="307" stroke="#a0acbc" stroke-width="0.9" stroke-dasharray="1.9 1.85" opacity="0.7"/>
<line x1="499.15" y1="60" x2="499.15" y2="307" stroke="#a0acbc" stroke-width="0.9" stroke-dasharray="1.9 1.85" opacity="0.7"/>
<line x1="514.18" y1="60" x2="514.18" y2="307" stroke="#a0acbc" stroke-width="0.9" stroke-dasharray="1.9 1.85" opacity="0.7"/>
<line x1="529.21" y1="60" x2="529.21" y2="307" stroke="#a0acbc" stroke-width="0.9" stroke-dasharray="1.9 1.85" opacity="0.7"/>
<line x1="544.24" y1="60" x2="544.24" y2="307" stroke="#a0acbc" stroke-width="0.9" stroke-dasharray="1.9 1.85" opacity="0.7"/>
<line x1="559.27" y1="60" x2="559.27" y2="307" stroke="#a0acbc" stroke-width="0.9" stroke-dasharray="1.9 1.85" opacity="0.7"/>
<line x1="574.30" y1="60" x2="574.30" y2="307" stroke="#a0acbc" stroke-width="0.9" stroke-dasharray="1.9 1.85" opacity="0.7"/>
<line x1="589.33" y1="60" x2="589.33" y2="307" stroke="#a0acbc" stroke-width="0.9" stroke-dasharray="1.9 1.85" opacity="0.7"/>
<line x1="604.36" y1="60" x2="604.36" y2="307" stroke="#a0acbc" stroke-width="0.9" stroke-dasharray="1.9 1.85" opacity="0.7"/>
<line x1="109" y1="63.40" x2="620" y2="63.40" stroke="#a0acbc" stroke-width="0.9" stroke-dasharray="1.5 1.4" opacity="0.7"/>
<line x1="109" y1="85.46" x2="620" y2="85.46" stroke="#a0acbc" stroke-width="0.9" stroke-dasharray="1.5 1.4" opacity="0.7"/>
<line x1="109" y1="107.52" x2="620" y2="107.52" stroke="#a0acbc" stroke-width="0.9" stroke-dasharray="1.5 1.4" opacity="0.7"/>
<line x1="109" y1="129.58" x2="620" y2="129.58" stroke="#a0acbc" stroke-width="0.9" stroke-dasharray="1.5 1.4" opacity="0.7"/>
<line x1="109" y1="151.64" x2="620" y2="151.64" stroke="#a0acbc" stroke-width="0.9" stroke-dasharray="1.5 1.4" opacity="0.7"/>
<line x1="109" y1="173.70" x2="620" y2="173.70" stroke="#a0acbc" stroke-width="0.9" stroke-dasharray="1.5 1.4" opacity="0.7"/>
<line x1="109" y1="195.76" x2="620" y2="195.76" stroke="#a0acbc" stroke-width="0.9" stroke-dasharray="1.5 1.4" opacity="0.7"/>
<line x1="109" y1="217.82" x2="620" y2="217.82" stroke="#a0acbc" stroke-width="0.9" stroke-dasharray="1.5 1.4" opacity="0.7"/>
<line x1="109" y1="239.88" x2="620" y2="239.88" stroke="#a0acbc" stroke-width="0.9" stroke-dasharray="1.5 1.4" opacity="0.7"/>
<line x1="109" y1="261.94" x2="620" y2="261.94" stroke="#a0acbc" stroke-width="0.9" stroke-dasharray="1.5 1.4" opacity="0.7"/>
<line x1="109" y1="284.00" x2="620" y2="284.00" stroke="#a0acbc" stroke-width="0.9" stroke-dasharray="1.5 1.4" opacity="0.7"/>
<line x1="109" y1="306.06" x2="620" y2="306.06" stroke="#a0acbc" stroke-width="0.9" stroke-dasharray="1.5 1.4" opacity="0.7"/>
<line x1="123.40" y1="311" x2="123.40" y2="433" stroke="#a0acbc" stroke-width="0.9" stroke-dasharray="2.1 1.65" opacity="0.65"/>
<line x1="138.43" y1="311" x2="138.43" y2="433" stroke="#a0acbc" stroke-width="0.9" stroke-dasharray="2.1 1.65" opacity="0.65"/>
<line x1="153.46" y1="311" x2="153.46" y2="433" stroke="#a0acbc" stroke-width="0.9" stroke-dasharray="2.1 1.65" opacity="0.65"/>
<line x1="168.49" y1="311" x2="168.49" y2="433" stroke="#a0acbc" stroke-width="0.9" stroke-dasharray="2.1 1.65" opacity="0.65"/>
<line x1="183.52" y1="311" x2="183.52" y2="433" stroke="#a0acbc" stroke-width="0.9" stroke-dasharray="2.1 1.65" opacity="0.65"/>
<line x1="198.55" y1="311" x2="198.55" y2="433" stroke="#a0acbc" stroke-width="0.9" stroke-dasharray="2.1 1.65" opacity="0.65"/>
<line x1="213.58" y1="311" x2="213.58" y2="433" stroke="#a0acbc" stroke-width="0.9" stroke-dasharray="2.1 1.65" opacity="0.65"/>
<line x1="228.61" y1="311" x2="228.61" y2="433" stroke="#a0acbc" stroke-width="0.9" stroke-dasharray="2.1 1.65" opacity="0.65"/>
<line x1="243.64" y1="311" x2="243.64" y2="433" stroke="#a0acbc" stroke-width="0.9" stroke-dasharray="2.1 1.65" opacity="0.65"/>
<line x1="258.67" y1="311" x2="258.67" y2="433" stroke="#a0acbc" stroke-width="0.9" stroke-dasharray="2.1 1.65" opacity="0.65"/>
<line x1="273.70" y1="311" x2="273.70" y2="433" stroke="#a0acbc" stroke-width="0.9" stroke-dasharray="2.1 1.65" opacity="0.65"/>
<line x1="288.73" y1="311" x2="288.73" y2="433" stroke="#a0acbc" stroke-width="0.9" stroke-dasharray="2.1 1.65" opacity="0.65"/>
<line x1="303.76" y1="311" x2="303.76" y2="433" stroke="#a0acbc" stroke-width="0.9" stroke-dasharray="2.1 1.65" opacity="0.65"/>
<line x1="318.79" y1="311" x2="318.79" y2="433" stroke="#a0acbc" stroke-width="0.9" stroke-dasharray="2.1 1.65" opacity="0.65"/>
<line x1="333.82" y1="311" x2="333.82" y2="433" stroke="#a0acbc" stroke-width="0.9" stroke-dasharray="2.1 1.65" opacity="0.65"/>
<line x1="348.85" y1="311" x2="348.85" y2="433" stroke="#a0acbc" stroke-width="0.9" stroke-dasharray="2.1 1.65" opacity="0.65"/>
<line x1="363.88" y1="311" x2="363.88" y2="433" stroke="#a0acbc" stroke-width="0.9" stroke-dasharray="2.1 1.65" opacity="0.65"/>
<line x1="378.91" y1="311" x2="378.91" y2="433" stroke="#a0acbc" stroke-width="0.9" stroke-dasharray="2.1 1.65" opacity="0.65"/>
<line x1="393.94" y1="311" x2="393.94" y2="433" stroke="#a0acbc" stroke-width="0.9" stroke-dasharray="2.1 1.65" opacity="0.65"/>
<line x1="408.97" y1="311" x2="408.97" y2="433" stroke="#a0acbc" stroke-width="0.9" stroke-dasharray="2.1 1.65" opacity="0.65"/>
<line x1="424.00" y1="311" x2="424.00" y2="433" stroke="#a0acbc" stroke-width="0.9" stroke-dasharray="2.1 1.65" opacity="0.65"/>
<line x1="439.03" y1="311" x2="439.03" y2="433" stroke="#a0acbc" stroke-width="0.9" stroke-dasharray="2.1 1.65" opacity="0.65"/>
<line x1="454.06" y1="311" x2="454.06" y2="433" stroke="#a0acbc" stroke-width="0.9" stroke-dasharray="2.1 1.65" opacity="0.65"/>
<line x1="469.09" y1="311" x2="469.09" y2="433" stroke="#a0acbc" stroke-width="0.9" stroke-dasharray="2.1 1.65" opacity="0.65"/>
<line x1="484.12" y1="311" x2="484.12" y2="433" stroke="#a0acbc" stroke-width="0.9" stroke-dasharray="2.1 1.65" opacity="0.65"/>
<line x1="499.15" y1="311" x2="499.15" y2="433" stroke="#a0acbc" stroke-width="0.9" stroke-dasharray="2.1 1.65" opacity="0.65"/>
<line x1="514.18" y1="311" x2="514.18" y2="433" stroke="#a0acbc" stroke-width="0.9" stroke-dasharray="2.1 1.65" opacity="0.65"/>
<line x1="529.21" y1="311" x2="529.21" y2="433" stroke="#a0acbc" stroke-width="0.9" stroke-dasharray="2.1 1.65" opacity="0.65"/>
<line x1="544.24" y1="311" x2="544.24" y2="433" stroke="#a0acbc" stroke-width="0.9" stroke-dasharray="2.1 1.65" opacity="0.65"/>
<line x1="559.27" y1="311" x2="559.27" y2="433" stroke="#a0acbc" stroke-width="0.9" stroke-dasharray="2.1 1.65" opacity="0.65"/>
<line x1="574.30" y1="311" x2="574.30" y2="433" stroke="#a0acbc" stroke-width="0.9" stroke-dasharray="2.1 1.65" opacity="0.65"/>
<line x1="589.33" y1="311" x2="589.33" y2="433" stroke="#a0acbc" stroke-width="0.9" stroke-dasharray="2.1 1.65" opacity="0.65"/>
<line x1="604.36" y1="311" x2="604.36" y2="433" stroke="#a0acbc" stroke-width="0.9" stroke-dasharray="2.1 1.65" opacity="0.65"/>
<line x1="108.5" y1="59.4" x2="620" y2="59.4" stroke="#a8a8a8" stroke-width="0.9" />
<line x1="108.5" y1="59.4" x2="108.5" y2="433.5" stroke="#a8a8a8" stroke-width="0.9" />
<line x1="620" y1="59.4" x2="620" y2="433.5" stroke="#a8a8a8" stroke-width="0.9" stroke-dasharray="2.5 1"/>
<line x1="108.5" y1="307.6" x2="620" y2="307.6" stroke="#505050" stroke-width="0.8" />
<line x1="108.5" y1="309.4" x2="620" y2="309.4" stroke="#d8d8d8" stroke-width="1.3" />
<line x1="108.5" y1="433.5" x2="620" y2="433.5" stroke="#d0d0d0" stroke-width="0.9" />
<path d="M109.50 234.3V243.7M111.50 235.9V243.8M113.50 235.4V246.8M115.50 234.5V245.3M116.50 232.0V240.7M118.50 231.6V240.3M120.50 228.5V238.3M122.50 229.5V238.2M124.50 232.5V241.3M126.50 234.9V244.5M128.50 234.6V246.4M130.50 226.7V238.2M131.50 219.5V231.8M133.50 211.8V225.6M135.50 215.6V228.4M137.50 219.4V229.0M139.50 219.1V227.3M141.50 216.5V224.0M143.50 215.8V221.8M145.50 216.6V223.9M146.50 214.7V223.6M148.50 211.8V221.6M150.50 211.7V221.4M152.50 215.5V222.3M154.50 215.4V223.9M156.50 214.8V225.9M158.50 210.9V220.7M160.50 207.1V215.3M161.50 204.7V210.6M163.50 201.7V207.3M165.50 196.8V205.1M167.50 194.7V200.4M169.50 194.2V204.0M171.50 194.5V215.0M173.50 196.6V219.9M175.50 194.3V205.5M176.50 190.1V197.9M178.50 187.9V197.8M180.50 189.8V198.1M182.50 193.0V200.6M184.50 194.6V199.7M186.50 192.6V198.4M188.50 190.1V197.8M190.50 186.8V193.8M191.50 181.1V189.2M193.50 181.0V188.2M195.50 169.7V180.0M197.50 158.0V170.0M199.50 147.2V162.2M201.50 146.0V159.4M203.50 147.1V163.2M205.50 154.6V171.1M206.50 155.7V165.2M208.50 158.1V168.0M210.50 154.6V171.0M212.50 148.9V159.5M214.50 143.8V158.1M216.50 150.8V157.1M218.50 146.0V157.2M220.50 143.1V159.7M221.50 144.2V157.9M223.50 145.6V156.2M225.50 146.8V153.6M227.50 145.0V152.7M229.50 142.1V149.1M231.50 136.8V146.2M233.50 128.7V142.6M235.50 121.3V147.9M236.50 116.6V147.5M238.50 113.9V139.5M240.50 110.1V128.5M242.50 108.3V120.7M244.50 93.2V109.4M246.50 82.9V105.9M248.50 89.6V107.3M250.50 91.9V106.5M251.50 92.8V102.2M253.50 90.7V101.9M255.50 91.7V101.0M257.50 92.8V102.5M259.50 94.7V109.2M261.50 96.3V115.8M263.50 98.7V115.6M265.50 96.9V112.6M266.50 98.3V107.7M268.50 96.5V105.4M270.50 95.1V104.9M272.50 90.4V98.7M274.50 85.4V94.4M276.50 81.6V92.9M278.50 77.1V90.8M280.50 74.3V88.7M281.50 73.2V86.6M283.50 75.2V87.6M285.50 80.3V92.4M287.50 88.3V102.0M289.50 101.8V119.0M291.50 110.5V134.7M293.50 116.4V134.3M295.50 122.6V138.2M296.50 124.7V140.5M298.50 127.4V143.5M300.50 141.3V158.4M302.50 152.7V167.7M304.50 156.8V166.5M306.50 153.9V163.9M308.50 153.8V162.8M310.50 153.1V163.6M311.50 153.7V166.4M313.50 156.0V169.7M315.50 160.3V171.4M317.50 169.0V174.6M319.50 176.3V200.7M321.50 192.1V203.7M323.50 188.0V199.6M325.50 185.2V199.0M326.50 191.8V214.6M328.50 190.8V210.1M330.50 192.0V209.7M332.50 198.5V212.5M334.50 203.9V219.5M336.50 209.8V230.4M338.50 219.5V236.3M340.50 219.1V237.6M341.50 220.9V238.5M343.50 225.5V245.0M345.50 220.3V241.5M347.50 212.5V227.1M349.50 205.0V223.6M351.50 201.7V215.9M353.50 202.5V220.8M354.50 199.4V221.7M356.50 196.2V216.7M358.50 196.5V210.7M360.50 196.2V210.1M362.50 197.5V212.8M364.50 195.7V208.9M366.50 193.9V203.6M368.50 198.8V208.3M369.50 200.1V214.7M371.50 206.4V220.8M373.50 213.6V225.7M375.50 216.1V229.4M377.50 215.1V225.8M379.50 213.6V223.8M381.50 210.2V222.3M383.50 208.0V218.8M384.50 211.3V222.5M386.50 211.6V223.3M388.50 213.6V223.3M390.50 213.9V222.1M392.50 210.0V219.7M394.50 205.0V217.4M396.50 202.6V218.9M398.50 202.4V218.8M399.50 202.3V221.3M401.50 203.4V220.3M403.50 201.3V214.6M405.50 190.4V206.3M407.50 196.8V210.1M409.50 202.8V218.0M411.50 217.4V225.3M413.50 219.5V227.3M414.50 219.3V232.5M416.50 228.7V239.6M418.50 233.7V250.9M420.50 239.6V257.0M422.50 246.6V261.3M424.50 250.9V266.2M426.50 246.4V263.5M428.50 242.0V260.9M429.50 255.5V269.2M431.50 254.4V265.3M433.50 251.2V262.6M435.50 252.0V260.5M437.50 251.7V260.8M439.50 253.0V259.6M441.50 254.6V263.5M443.50 253.1V265.0M444.50 253.0V264.0M446.50 252.7V259.8M448.50 246.2V258.4M450.50 244.9V261.8M452.50 252.6V262.0M454.50 256.2V264.9M456.50 258.3V267.1M458.50 258.5V267.9M459.50 256.8V266.0M461.50 251.2V262.4M463.50 253.3V265.7M465.50 256.6V268.5M467.50 259.1V270.1M469.50 260.6V275.0M471.50 258.7V270.0M473.50 253.1V265.6M474.50 248.8V265.4M476.50 255.4V267.7M478.50 255.5V269.8M480.50 258.4V271.5M482.50 257.6V269.1M484.50 252.7V263.6M486.50 249.7V262.1M488.50 250.2V258.8M489.50 250.8V259.3M491.50 253.1V260.2M493.50 253.0V264.1M495.50 256.2V266.2M497.50 260.5V267.1M499.50 264.3V270.2M501.50 267.9V273.1M503.50 273.5V283.9M504.50 280.3V294.8M506.50 282.2V299.0M508.50 280.6V297.8M510.50 281.5V296.5M512.50 284.1V292.9M514.50 279.2V292.4M516.50 275.5V292.3M518.50 269.5V289.8M519.50 267.1V286.9M521.50 269.8V285.6M523.50 269.6V280.9M525.50 261.8V271.5M527.50 254.2V263.8M529.50 242.1V262.8M531.50 230.9V259.9M533.50 232.8V248.6M534.50 230.8V246.7M536.50 234.5V247.3M538.50 243.1V256.7M540.50 258.0V270.4M542.50 264.7V285.2M544.50 267.4V281.4M546.50 264.3V274.4M548.50 257.1V267.4M549.50 249.3V267.3M551.50 249.2V266.9M553.50 251.9V264.0M555.50 252.9V263.4M557.50 254.1V263.8M559.50 255.3V265.6M561.50 248.6V255.9M563.50 227.8V241.8M564.50 205.0V228.5M566.50 199.9V221.9M568.50 215.5V225.6M570.50 223.2V234.1M572.50 225.9V236.1M574.50 226.7V235.3M576.50 229.5V241.0M578.50 235.7V248.7M579.50 230.7V241.0M581.50 225.3V234.6M583.50 212.2V227.6M585.50 217.2V232.4M587.50 227.0V235.0M589.50 223.4V234.8M591.50 221.1V234.5M592.50 221.0V230.1M594.50 222.3V232.5M596.50 232.5V239.7M598.50 236.8V244.1M600.50 229.7V247.3M602.50 217.3V243.8M604.50 215.6V232.8M606.50 214.8V223.0M607.50 227.2V243.5M609.50 240.0V257.5M611.50 245.9V264.5M613.50 242.2V251.4M615.50 239.4V247.0M617.50 239.2V247.4M619.50 238.6V248.8" stroke="#00c000" stroke-width="1" fill="none"/>
<path d="M109.00 240.4h1M109.50 235.0h1M111.00 236.4h1M111.50 239.9h1M113.00 236.2h1M113.50 236.4h1M115.00 235.9h1M115.50 236.9h1M116.00 237.0h1M116.50 235.4h1M118.00 239.1h1M118.50 234.1h1M120.00 231.5h1M120.50 236.5h1M122.00 235.0h1M122.50 232.7h1M124.00 233.0h1M124.50 234.3h1M126.00 237.9h1M126.50 240.5h1M128.00 244.0h1M128.50 242.8h1M130.00 232.7h1M130.50 236.7h1M131.00 231.6h1M131.50 221.0h1M133.00 213.9h1M133.50 218.5h1M135.00 225.4h1M135.50 222.9h1M137.00 226.1h1M137.50 225.1h1M139.00 226.0h1M139.50 226.9h1M141.00 216.9h1M141.50 221.8h1M143.00 220.7h1M143.50 217.5h1M145.00 216.8h1M145.50 220.0h1M146.00 215.2h1M146.50 221.5h1M148.00 215.6h1M148.50 220.3h1M150.00 217.0h1M150.50 220.3h1M152.00 217.4h1M152.50 218.3h1M154.00 223.5h1M154.50 216.7h1M156.00 217.4h1M156.50 220.2h1M158.00 211.0h1M158.50 215.0h1M160.00 215.0h1M160.50 212.8h1M161.00 208.7h1M161.50 205.0h1M163.00 206.6h1M163.50 206.2h1M165.00 197.7h1M165.50 202.1h1M167.00 195.9h1M167.50 195.6h1M169.00 194.2h1M169.50 195.7h1M171.00 195.0h1M171.50 212.4h1M173.00 202.4h1M173.50 204.7h1M175.00 203.8h1M175.50 205.4h1M176.00 190.8h1M176.50 190.9h1M178.00 196.1h1M178.50 189.5h1M180.00 194.2h1M180.50 191.0h1M182.00 197.0h1M182.50 200.5h1M184.00 195.9h1M184.50 196.5h1M186.00 195.6h1M186.50 197.1h1M188.00 196.3h1M188.50 197.7h1M190.00 192.5h1M190.50 192.0h1M191.00 184.0h1M191.50 181.3h1M193.00 182.9h1M193.50 186.0h1M195.00 179.4h1M195.50 179.9h1M197.00 160.7h1M197.50 160.7h1M199.00 156.6h1M199.50 160.7h1M201.00 154.7h1M201.50 156.7h1M203.00 161.7h1M203.50 159.7h1M205.00 157.5h1M205.50 167.6h1M206.00 165.0h1M206.50 159.5h1M208.00 165.3h1M208.50 159.8h1M210.00 169.5h1M210.50 167.8h1M212.00 159.3h1M212.50 155.9h1M214.00 145.7h1M214.50 144.0h1M216.00 154.1h1M216.50 156.7h1M218.00 155.3h1M218.50 148.4h1M220.00 147.1h1M220.50 152.8h1M221.00 146.0h1M221.50 156.6h1M223.00 151.8h1M223.50 155.2h1M225.00 150.2h1M225.50 150.4h1M227.00 148.4h1M227.50 146.4h1M229.00 143.3h1M229.50 145.4h1M231.00 139.8h1M231.50 141.6h1M233.00 130.2h1M233.50 136.5h1M235.00 141.8h1M235.50 134.8h1M236.00 144.8h1M236.50 130.3h1M238.00 127.0h1M238.50 131.6h1M240.00 118.9h1M240.50 127.4h1M242.00 120.0h1M242.50 111.5h1M244.00 106.8h1M244.50 95.4h1M246.00 84.6h1M246.50 88.4h1M248.00 103.4h1M248.50 105.4h1M250.00 101.5h1M250.50 94.0h1M251.00 94.8h1M251.50 101.7h1M253.00 101.8h1M253.50 100.1h1M255.00 96.5h1M255.50 94.8h1M257.00 99.8h1M257.50 93.0h1M259.00 94.9h1M259.50 99.5h1M261.00 97.6h1M261.50 115.5h1M263.00 100.5h1M263.50 103.2h1M265.00 101.1h1M265.50 98.9h1M266.00 106.0h1M266.50 100.7h1M268.00 101.6h1M268.50 102.8h1M270.00 101.8h1M270.50 99.3h1M272.00 95.7h1M272.50 97.0h1M274.00 86.0h1M274.50 93.2h1M276.00 87.8h1M276.50 92.1h1M278.00 84.3h1M278.50 80.4h1M280.00 75.0h1M280.50 77.2h1M281.00 83.4h1M281.50 77.1h1M283.00 79.5h1M283.50 75.4h1M285.00 89.2h1M285.50 87.0h1M287.00 101.1h1M287.50 89.8h1M289.00 110.4h1M289.50 116.2h1M291.00 127.2h1M291.50 134.3h1M293.00 129.1h1M293.50 127.8h1M295.00 123.4h1M295.50 124.6h1M296.00 128.8h1M296.50 127.3h1M298.00 141.5h1M298.50 138.2h1M300.00 146.3h1M300.50 149.2h1M302.00 156.6h1M302.50 167.1h1M304.00 159.2h1M304.50 166.2h1M306.00 153.9h1M306.50 157.7h1M308.00 155.6h1M308.50 158.3h1M310.00 154.0h1M310.50 157.3h1M311.00 157.6h1M311.50 156.7h1M313.00 166.3h1M313.50 165.0h1M315.00 164.6h1M315.50 163.9h1M317.00 173.1h1M317.50 172.6h1M319.00 198.1h1M319.50 191.6h1M321.00 193.7h1M321.50 198.2h1M323.00 197.3h1M323.50 197.5h1M325.00 194.6h1M325.50 194.7h1M326.00 194.8h1M326.50 200.0h1M328.00 201.6h1M328.50 202.9h1M330.00 200.6h1M330.50 192.1h1M332.00 205.5h1M332.50 206.0h1M334.00 215.4h1M334.50 207.8h1M336.00 224.8h1M336.50 214.0h1M338.00 227.8h1M338.50 225.9h1M340.00 233.3h1M340.50 230.5h1M341.00 223.5h1M341.50 225.4h1M343.00 236.5h1M343.50 225.7h1M345.00 234.5h1M345.50 235.0h1M347.00 220.0h1M347.50 219.3h1M349.00 221.6h1M349.50 208.7h1M351.00 201.9h1M351.50 208.2h1M353.00 210.8h1M353.50 207.5h1M354.00 204.1h1M354.50 212.4h1M356.00 215.7h1M356.50 198.9h1M358.00 209.1h1M358.50 206.5h1M360.00 203.0h1M360.50 196.5h1M362.00 204.4h1M362.50 202.1h1M364.00 199.9h1M364.50 206.8h1M366.00 202.0h1M366.50 195.0h1M368.00 207.3h1M368.50 201.5h1M369.00 214.7h1M369.50 208.7h1M371.00 210.4h1M371.50 207.1h1M373.00 217.1h1M373.50 224.9h1M375.00 222.9h1M375.50 218.7h1M377.00 224.6h1M377.50 223.8h1M379.00 223.2h1M379.50 219.2h1M381.00 219.1h1M381.50 215.7h1M383.00 211.1h1M383.50 208.5h1M384.00 216.6h1M384.50 215.2h1M386.00 223.0h1M386.50 214.7h1M388.00 219.0h1M388.50 217.4h1M390.00 215.6h1M390.50 221.3h1M392.00 218.8h1M392.50 219.7h1M394.00 207.4h1M394.50 206.1h1M396.00 206.5h1M396.50 206.8h1M398.00 214.7h1M398.50 209.1h1M399.00 209.4h1M399.50 208.7h1M401.00 219.7h1M401.50 205.5h1M403.00 212.8h1M403.50 204.2h1M405.00 196.8h1M405.50 197.5h1M407.00 208.4h1M407.50 197.1h1M409.00 216.4h1M409.50 210.0h1M411.00 220.5h1M411.50 224.7h1M413.00 227.1h1M413.50 221.5h1M414.00 226.2h1M414.50 228.3h1M416.00 235.8h1M416.50 237.0h1M418.00 234.4h1M418.50 247.2h1M420.00 250.9h1M420.50 244.9h1M422.00 256.0h1M422.50 256.9h1M424.00 259.0h1M424.50 259.9h1M426.00 256.7h1M426.50 246.6h1M428.00 260.2h1M428.50 254.2h1M429.00 258.7h1M429.50 258.9h1M431.00 257.8h1M431.50 254.6h1M433.00 256.0h1M433.50 254.2h1M435.00 253.9h1M435.50 252.3h1M437.00 257.9h1M437.50 253.5h1M439.00 256.3h1M439.50 254.4h1M441.00 261.9h1M441.50 256.6h1M443.00 256.6h1M443.50 264.4h1M444.00 255.5h1M444.50 257.6h1M446.00 253.8h1M446.50 255.5h1M448.00 247.9h1M448.50 246.8h1M450.00 260.0h1M450.50 259.8h1M452.00 261.4h1M452.50 255.7h1M454.00 262.7h1M454.50 256.5h1M456.00 261.6h1M456.50 261.2h1M458.00 261.2h1M458.50 261.8h1M459.00 265.7h1M459.50 258.7h1M461.00 260.4h1M461.50 256.0h1M463.00 257.9h1M463.50 264.7h1M465.00 267.2h1M465.50 256.9h1M467.00 267.5h1M467.50 259.6h1M469.00 273.9h1M469.50 264.3h1M471.00 262.5h1M471.50 261.8h1M473.00 256.3h1M473.50 262.0h1M474.00 248.9h1M474.50 261.3h1M476.00 267.0h1M476.50 255.7h1M478.00 269.2h1M478.50 269.1h1M480.00 264.0h1M480.50 264.9h1M482.00 266.8h1M482.50 266.1h1M484.00 259.3h1M484.50 256.3h1M486.00 259.4h1M486.50 250.7h1M488.00 252.3h1M488.50 250.8h1M489.00 253.6h1M489.50 259.1h1M491.00 255.0h1M491.50 253.7h1M493.00 260.9h1M493.50 257.9h1M495.00 262.4h1M495.50 262.9h1M497.00 264.9h1M497.50 261.3h1M499.00 267.6h1M499.50 266.5h1M501.00 269.2h1M501.50 269.2h1M503.00 279.5h1M503.50 276.9h1M504.00 287.7h1M504.50 283.7h1M506.00 298.9h1M506.50 284.0h1M508.00 295.1h1M508.50 296.3h1M510.00 283.3h1M510.50 284.4h1M512.00 292.2h1M512.50 287.4h1M514.00 282.6h1M514.50 289.5h1M516.00 285.5h1M516.50 285.9h1M518.00 272.4h1M518.50 273.7h1M519.00 280.0h1M519.50 271.1h1M521.00 280.5h1M521.50 272.8h1M523.00 278.6h1M523.50 275.8h1M525.00 265.6h1M525.50 267.1h1M527.00 255.8h1M527.50 260.9h1M529.00 248.5h1M529.50 261.9h1M531.00 241.3h1M531.50 243.0h1M533.00 238.5h1M533.50 235.9h1M534.00 230.8h1M534.50 245.2h1M536.00 239.7h1M536.50 245.8h1M538.00 243.3h1M538.50 250.6h1M540.00 259.1h1M540.50 265.7h1M542.00 267.7h1M542.50 270.5h1M544.00 268.9h1M544.50 274.3h1M546.00 266.3h1M546.50 265.6h1M548.00 262.1h1M548.50 257.7h1M549.00 265.6h1M549.50 260.5h1M551.00 263.1h1M551.50 253.1h1M553.00 262.0h1M553.50 254.2h1M555.00 258.3h1M555.50 256.9h1M557.00 261.1h1M557.50 262.8h1M559.00 263.1h1M559.50 255.7h1M561.00 253.0h1M561.50 252.6h1M563.00 233.7h1M563.50 235.9h1M564.00 215.5h1M564.50 215.3h1M566.00 210.7h1M566.50 205.1h1M568.00 220.2h1M568.50 217.3h1M570.00 224.6h1M570.50 227.9h1M572.00 231.1h1M572.50 226.3h1M574.00 233.0h1M574.50 233.4h1M576.00 235.3h1M576.50 233.8h1M578.00 246.9h1M578.50 248.7h1M579.00 232.7h1M579.50 240.8h1M581.00 233.8h1M581.50 226.8h1M583.00 213.3h1M583.50 217.6h1M585.00 230.8h1M585.50 221.4h1M587.00 231.0h1M587.50 234.3h1M589.00 229.2h1M589.50 227.1h1M591.00 223.2h1M591.50 233.6h1M592.00 222.5h1M592.50 228.1h1M594.00 228.8h1M594.50 226.0h1M596.00 236.7h1M596.50 238.9h1M598.00 241.4h1M598.50 239.7h1M600.00 247.2h1M600.50 239.9h1M602.00 229.0h1M602.50 222.0h1M604.00 229.7h1M604.50 219.9h1M606.00 219.6h1M606.50 220.3h1M607.00 227.8h1M607.50 229.7h1M609.00 249.0h1M609.50 255.7h1M611.00 258.0h1M611.50 246.3h1M613.00 243.2h1M613.50 245.5h1M615.00 243.8h1M615.50 240.9h1M617.00 240.3h1M617.50 246.9h1M619.00 239.6h1M619.50 245.1h1" stroke="#30e030" stroke-width="1" fill="none"/>
<line x1="108.5" y1="279.6" x2="620" y2="279.6" stroke="#8090a8" stroke-width="0.9" />
<line x1="289" y1="59.5" x2="289" y2="433.2" stroke="#780000" stroke-width="1.4" />
<rect x="287.7" y="58.4" width="3.1" height="4.6" fill="#ff2020" />
<rect x="288.3" y="59.2" width="1.9" height="2.8" fill="#ffffff" />
<rect x="287.4" y="307.4" width="3" height="2.6" fill="#ffffff" />
<polyline points="108.7,370.0 111.4,375.5 114.0,363.0 116.8,375.5 119.5,362.0 122.3,360.5 125.0,366.0 127.7,363.0 130.4,368.7 133.0,364.6 135.8,370.0 138.5,366.0 141.2,368.7 145.3,370.0 149.4,367.3 153.4,364.6 157.5,362.0 161.6,359.2 165.6,357.8 169.7,356.5 172.4,352.4 175.0,357.8 179.0,356.5 183.2,360.5 186.0,357.8 188.7,353.8 191.4,348.4 194.0,340.2 196.8,326.7 199.5,320.0 200.9,315.8 203.6,328.0 206.3,334.8 209.0,338.9 213.0,336.0 217.0,337.5 221.2,334.8 223.9,338.9 228.0,332.0 232.0,325.3 234.3,317.2 236.8,332.0 239.5,336.2 242.2,348.4 245.0,352.4 247.6,363.3 250.3,357.8 253.0,351.0 257.1,356.5 261.2,360.5 265.2,363.3 268.0,357.8 272.0,353.8 276.0,352.4 278.8,362.0 281.5,349.7 284.2,359.2 287.0,378.0 289.6,389.0 292.3,386.3 296.4,391.7 299.1,399.8 301.8,406.6 305.9,401.2 310.0,399.8 314.0,405.3 316.7,410.7 319.4,418.8 323.5,424.2 326.2,427.0 330.3,417.5 334.3,409.3 338.4,397.0 341.1,391.7 343.8,395.8 346.5,386.3 349.2,378.0 352.0,368.7 355.0,364.6 359.0,359.2 363.1,357.8 367.2,357.8 371.3,362.0 375.3,366.0 379.4,363.3 382.1,366.0 386.2,370.0 390.2,368.7 394.3,370.0 397.0,366.0 398.4,376.8 401.0,370.0 405.1,372.8 407.8,370.0 409.2,385.0 413.3,387.7 417.3,383.6 420.0,393.0 422.8,386.3 425.5,385.0 428.2,391.7 430.9,378.0 435.0,382.2 439.0,379.5 443.0,375.5 445.8,380.9 448.5,370.0 451.2,387.7 453.9,376.8 458.0,371.4 462.0,363.3 466.1,368.7 470.2,371.4 472.9,372.8 475.6,385.0 479.7,382.2 482.7,378.0 486.8,382.2 490.8,391.7 494.9,385.0 499.0,386.3 503.0,391.7 507.1,398.5 511.2,389.0 515.2,393.0 517.9,401.2 520.6,383.6 524.7,380.9 527.4,376.8 530.1,363.3 532.8,360.5 535.6,370.0 538.3,363.3 541.0,366.0 545.0,362.0 547.8,353.8 550.5,347.0 553.2,359.2 557.2,360.5 561.3,353.8 564.0,359.2 566.7,375.5 569.4,380.9 572.1,386.3 574.9,383.6 577.6,368.7 580.3,363.3 584.3,362.0 588.4,360.5 592.5,355.1 596.5,363.3 600.6,357.8 603.3,348.4 606.0,357.8 608.7,378.0 610.5,385.0 612.5,372.0 615.0,380.0 617.5,370.0 620.0,374.0" fill="none" stroke="#38a060" stroke-width="0.85" stroke-linejoin="round"/>
<polyline points="108.7,371.4 112.8,363.3 115.5,362.0 118.2,363.3 121.0,367.3 123.6,363.3 126.3,362.0 129.0,367.3 131.7,374.0 134.5,378.0 137.2,375.5 139.9,378.0 142.6,383.6 146.6,380.9 150.7,383.6 154.8,376.8 157.5,372.8 160.2,378.0 163.0,383.6 167.0,387.7 171.0,389.0 175.0,386.3 177.8,376.8 180.5,379.5 184.6,374.0 188.7,370.0 192.7,372.8 195.4,367.3 199.5,372.8 202.2,370.0 206.3,364.6 210.3,370.0 214.4,366.0 219.8,374.0 225.2,368.7 230.0,374.0 232.7,368.7 235.4,366.0 238.1,370.0 240.8,380.9 243.5,391.7 246.3,405.3 249.0,409.3 251.7,405.3 254.4,397.0 258.5,399.8 262.5,394.4 266.6,390.4 270.6,393.0 274.7,391.7 278.8,395.8 281.5,401.2 284.2,394.4 287.0,383.6 289.6,367.3 291.8,360.5 295.0,363.3 299.1,363.3 303.2,357.8 307.2,363.3 311.3,363.3 315.4,355.1 319.4,345.6 323.5,338.9 327.6,332.0 331.6,334.8 334.3,343.0 338.4,317.2 342.5,321.3 345.2,337.5 347.9,343.0 352.0,356.5 355.0,357.8 359.0,360.5 363.1,356.5 367.2,352.4 371.3,351.0 375.3,345.6 379.4,352.4 382.1,357.8 384.8,355.1 388.9,357.8 392.9,360.5 397.0,366.0 401.0,370.0 405.1,371.4 409.2,372.8 411.9,374.0 414.6,376.8 417.3,372.8 421.4,367.3 424.1,353.8 426.8,351.0 429.5,344.3 432.2,353.8 436.3,343.0 440.4,341.6 444.4,343.0 449.9,343.0 455.3,344.3 459.3,345.6 463.4,352.4 467.5,362.0 471.5,371.4 474.2,386.3 477.0,376.8 481.0,375.5 483.7,382.2 485.4,383.6 489.5,385.0 493.5,382.2 497.6,383.6 501.7,380.9 505.7,382.2 508.5,374.0 512.5,374.0 516.6,380.9 520.6,371.4 524.7,376.8 528.8,376.8 532.8,372.8 536.9,375.5 539.6,366.0 543.7,363.3 546.4,362.0 549.1,366.0 551.8,372.8 554.5,385.0 558.6,380.9 561.3,391.7 564.0,405.3 566.7,413.4 569.4,405.3 572.1,398.5 574.9,394.4 577.6,370.0 581.6,366.0 584.3,372.8 588.4,367.3 593.8,363.3 597.9,362.0 600.6,352.4 603.3,363.3 606.0,367.3 608.7,376.0 611.0,382.0 613.0,372.0 616.0,368.0 619.0,372.0" fill="none" stroke="#d0c418" stroke-width="0.9" stroke-linejoin="round"/>
<text x="602.4" y="320" font-size="11.0" fill="#7e7e7e" textLength="16.4" lengthAdjust="spacingAndGlyphs" stroke="#7e7e7e" stroke-width="0.2" >EUR</text>
<text x="602.4" y="335.6" font-size="11.0" fill="#7e7e7e" textLength="16.4" lengthAdjust="spacingAndGlyphs" stroke="#7e7e7e" stroke-width="0.2" >USD</text>
<text x="602.4" y="350.5" font-size="11.0" fill="#7e7e7e" textLength="16.4" lengthAdjust="spacingAndGlyphs" stroke="#7e7e7e" stroke-width="0.2" >GBP</text>
<text x="602.4" y="366" font-size="11.0" fill="#7e7e7e" textLength="16.4" lengthAdjust="spacingAndGlyphs" stroke="#7e7e7e" stroke-width="0.2" >CAD</text>
<text x="602.4" y="381.3" font-size="11.0" fill="#7e7e7e" textLength="16.4" lengthAdjust="spacingAndGlyphs" stroke="#7e7e7e" stroke-width="0.2" >CHF</text>
<text x="602.4" y="397" font-size="11.0" fill="#e8d800" textLength="16.4" lengthAdjust="spacingAndGlyphs" stroke="#e8d800" stroke-width="0.2" >JPY</text>
<text x="602.4" y="411.8" font-size="11.0" fill="#2e9e5e" textLength="16.4" lengthAdjust="spacingAndGlyphs" stroke="#2e9e5e" stroke-width="0.2" >NZD</text>
<text x="602.4" y="426.7" font-size="11.0" fill="#7e7e7e" textLength="16.4" lengthAdjust="spacingAndGlyphs" stroke="#7e7e7e" stroke-width="0.2" >AUD</text>
<path d="M110.4 63.8 h2.8 l-1.4 2z" fill="#e8e8e8"/>
<text x="115.4" y="67" font-size="7.2" fill="#ffffff" textLength="83.6" lengthAdjust="spacingAndGlyphs" stroke="#ffffff" stroke-width="0.2" >NZDJPY,H1  69.795 69.823 69.701 69.754</text>
<text x="110.8" y="318.2" font-size="7.0" fill="#f0f0f0" textLength="189" lengthAdjust="spacingAndGlyphs" stroke="#f0f0f0" stroke-width="0.2" >CurrencyIndex (1) 50.09632 50.18576 50.21182 50.01085 50.16480 50.29824 49.97871 50.65565</text>
<line x1="620" y1="63.4" x2="622" y2="63.4" stroke="#c0c0c0" stroke-width="0.7" />
<text x="622.6" y="66.1" font-size="6.6" fill="#e8e8e8" textLength="13.2" lengthAdjust="spacingAndGlyphs" stroke="#e8e8e8" stroke-width="0.2" >71.745</text>
<line x1="620" y1="85.46" x2="622" y2="85.46" stroke="#c0c0c0" stroke-width="0.7" />
<text x="622.6" y="88.16" font-size="6.6" fill="#e8e8e8" textLength="13.2" lengthAdjust="spacingAndGlyphs" stroke="#e8e8e8" stroke-width="0.2" >71.540</text>
<line x1="620" y1="107.52" x2="622" y2="107.52" stroke="#c0c0c0" stroke-width="0.7" />
<text x="622.6" y="110.22" font-size="6.6" fill="#e8e8e8" textLength="13.2" lengthAdjust="spacingAndGlyphs" stroke="#e8e8e8" stroke-width="0.2" >71.340</text>
<line x1="620" y1="129.57999999999998" x2="622" y2="129.57999999999998" stroke="#c0c0c0" stroke-width="0.7" />
<text x="622.6" y="132.27999999999997" font-size="6.6" fill="#e8e8e8" textLength="13.2" lengthAdjust="spacingAndGlyphs" stroke="#e8e8e8" stroke-width="0.2" >71.135</text>
<line x1="620" y1="151.64" x2="622" y2="151.64" stroke="#c0c0c0" stroke-width="0.7" />
<text x="622.6" y="154.33999999999997" font-size="6.6" fill="#e8e8e8" textLength="13.2" lengthAdjust="spacingAndGlyphs" stroke="#e8e8e8" stroke-width="0.2" >70.930</text>
<line x1="620" y1="173.7" x2="622" y2="173.7" stroke="#c0c0c0" stroke-width="0.7" />
<text x="622.6" y="176.39999999999998" font-size="6.6" fill="#e8e8e8" textLength="13.2" lengthAdjust="spacingAndGlyphs" stroke="#e8e8e8" stroke-width="0.2" >70.725</text>
<line x1="620" y1="195.76" x2="622" y2="195.76" stroke="#c0c0c0" stroke-width="0.7" />
<text x="622.6" y="198.45999999999998" font-size="6.6" fill="#e8e8e8" textLength="13.2" lengthAdjust="spacingAndGlyphs" stroke="#e8e8e8" stroke-width="0.2" >70.525</text>
<line x1="620" y1="217.82" x2="622" y2="217.82" stroke="#c0c0c0" stroke-width="0.7" />
<text x="622.6" y="220.51999999999998" font-size="6.6" fill="#e8e8e8" textLength="13.2" lengthAdjust="spacingAndGlyphs" stroke="#e8e8e8" stroke-width="0.2" >70.320</text>
<line x1="620" y1="239.88" x2="622" y2="239.88" stroke="#c0c0c0" stroke-width="0.7" />
<text x="622.6" y="242.57999999999998" font-size="6.6" fill="#e8e8e8" textLength="13.2" lengthAdjust="spacingAndGlyphs" stroke="#e8e8e8" stroke-width="0.2" >70.115</text>
<line x1="620" y1="261.94" x2="622" y2="261.94" stroke="#c0c0c0" stroke-width="0.7" />
<text x="622.6" y="264.64" font-size="6.6" fill="#e8e8e8" textLength="13.2" lengthAdjust="spacingAndGlyphs" stroke="#e8e8e8" stroke-width="0.2" >69.910</text>
<line x1="620" y1="284.0" x2="622" y2="284.0" stroke="#c0c0c0" stroke-width="0.7" />
<text x="622.6" y="286.7" font-size="6.6" fill="#e8e8e8" textLength="13.2" lengthAdjust="spacingAndGlyphs" stroke="#e8e8e8" stroke-width="0.2" >69.705</text>
<line x1="620" y1="306.06" x2="622" y2="306.06" stroke="#c0c0c0" stroke-width="0.7" />
<text x="622.6" y="308.76" font-size="6.6" fill="#e8e8e8" textLength="13.2" lengthAdjust="spacingAndGlyphs" stroke="#e8e8e8" stroke-width="0.2" >69.505</text>
<rect x="621" y="276.3" width="16.8" height="6.6" fill="#ffffff" />
<text x="622.6" y="281.9" font-size="6.6" fill="#000000" textLength="13.2" lengthAdjust="spacingAndGlyphs" stroke="#000000" stroke-width="0.2" >69.754</text>
<text x="621.8" y="317.2" font-size="6.6" fill="#e8e8e8" textLength="17" lengthAdjust="spacingAndGlyphs" stroke="#e8e8e8" stroke-width="0.2" >50.62838</text>
<text x="621.8" y="430.4" font-size="6.6" fill="#e8e8e8" textLength="17" lengthAdjust="spacingAndGlyphs" stroke="#e8e8e8" stroke-width="0.2" >49.54549</text>
<text x="108.5" y="442.2" font-size="6.6" fill="#e8e8e8" textLength="21.75" lengthAdjust="spacingAndGlyphs" stroke="#e8e8e8" stroke-width="0.2" >17 Jul 2020</text>
<line x1="138.3" y1="433.5" x2="138.3" y2="436" stroke="#c0c0c0" stroke-width="0.7" />
<text x="138.5" y="442.2" font-size="6.6" fill="#e8e8e8" textLength="23.75" lengthAdjust="spacingAndGlyphs" stroke="#e8e8e8" stroke-width="0.2" >20 Jul 06:00</text>
<line x1="168.3" y1="433.5" x2="168.3" y2="436" stroke="#c0c0c0" stroke-width="0.7" />
<text x="168.5" y="442.2" font-size="6.6" fill="#e8e8e8" textLength="23.75" lengthAdjust="spacingAndGlyphs" stroke="#e8e8e8" stroke-width="0.2" >20 Jul 22:00</text>
<line x1="198.3" y1="433.5" x2="198.3" y2="436" stroke="#c0c0c0" stroke-width="0.7" />
<text x="198.5" y="442.2" font-size="6.6" fill="#e8e8e8" textLength="23.75" lengthAdjust="spacingAndGlyphs" stroke="#e8e8e8" stroke-width="0.2" >21 Jul 14:00</text>
<line x1="228.3" y1="433.5" x2="228.3" y2="436" stroke="#c0c0c0" stroke-width="0.7" />
<text x="228.5" y="442.2" font-size="6.6" fill="#e8e8e8" textLength="23.75" lengthAdjust="spacingAndGlyphs" stroke="#e8e8e8" stroke-width="0.2" >22 Jul 06:00</text>
<line x1="258.3" y1="433.5" x2="258.3" y2="436" stroke="#c0c0c0" stroke-width="0.7" />
<text x="258.5" y="442.2" font-size="6.6" fill="#e8e8e8" textLength="23.75" lengthAdjust="spacingAndGlyphs" stroke="#e8e8e8" stroke-width="0.2" >22 Jul 22:00</text>
<line x1="288.3" y1="433.5" x2="288.3" y2="436" stroke="#c0c0c0" stroke-width="0.7" />
<text x="288.5" y="442.2" font-size="6.6" fill="#e8e8e8" textLength="23.75" lengthAdjust="spacingAndGlyphs" stroke="#e8e8e8" stroke-width="0.2" >23 Jul 14:00</text>
<line x1="318.3" y1="433.5" x2="318.3" y2="436" stroke="#c0c0c0" stroke-width="0.7" />
<text x="318.5" y="442.2" font-size="6.6" fill="#e8e8e8" textLength="23.75" lengthAdjust="spacingAndGlyphs" stroke="#e8e8e8" stroke-width="0.2" >24 Jul 06:00</text>
<line x1="348.3" y1="433.5" x2="348.3" y2="436" stroke="#c0c0c0" stroke-width="0.7" />
<text x="348.5" y="442.2" font-size="6.6" fill="#e8e8e8" textLength="23.75" lengthAdjust="spacingAndGlyphs" stroke="#e8e8e8" stroke-width="0.2" >24 Jul 22:00</text>
<line x1="378.3" y1="433.5" x2="378.3" y2="436" stroke="#c0c0c0" stroke-width="0.7" />
<text x="378.5" y="442.2" font-size="6.6" fill="#e8e8e8" textLength="23.75" lengthAdjust="spacingAndGlyphs" stroke="#e8e8e8" stroke-width="0.2" >27 Jul 14:00</text>
<line x1="408.3" y1="433.5" x2="408.3" y2="436" stroke="#c0c0c0" stroke-width="0.7" />
<text x="408.5" y="442.2" font-size="6.6" fill="#e8e8e8" textLength="23.75" lengthAdjust="spacingAndGlyphs" stroke="#e8e8e8" stroke-width="0.2" >28 Jul 06:00</text>
<line x1="438.3" y1="433.5" x2="438.3" y2="436" stroke="#c0c0c0" stroke-width="0.7" />
<text x="438.5" y="442.2" font-size="6.6" fill="#e8e8e8" textLength="23.75" lengthAdjust="spacingAndGlyphs" stroke="#e8e8e8" stroke-width="0.2" >28 Jul 22:00</text>
<line x1="468.3" y1="433.5" x2="468.3" y2="436" stroke="#c0c0c0" stroke-width="0.7" />
<text x="468.5" y="442.2" font-size="6.6" fill="#e8e8e8" textLength="23.75" lengthAdjust="spacingAndGlyphs" stroke="#e8e8e8" stroke-width="0.2" >29 Jul 14:00</text>
<line x1="498.3" y1="433.5" x2="498.3" y2="436" stroke="#c0c0c0" stroke-width="0.7" />
<text x="498.5" y="442.2" font-size="6.6" fill="#e8e8e8" textLength="23.75" lengthAdjust="spacingAndGlyphs" stroke="#e8e8e8" stroke-width="0.2" >30 Jul 06:00</text>
<line x1="528.3" y1="433.5" x2="528.3" y2="436" stroke="#c0c0c0" stroke-width="0.7" />
<text x="528.5" y="442.2" font-size="6.6" fill="#e8e8e8" textLength="23.75" lengthAdjust="spacingAndGlyphs" stroke="#e8e8e8" stroke-width="0.2" >30 Jul 22:00</text>
<line x1="558.3" y1="433.5" x2="558.3" y2="436" stroke="#c0c0c0" stroke-width="0.7" />
<text x="558.5" y="442.2" font-size="6.6" fill="#e8e8e8" textLength="23.75" lengthAdjust="spacingAndGlyphs" stroke="#e8e8e8" stroke-width="0.2" >31 Jul 14:00</text>
<line x1="588.3" y1="433.5" x2="588.3" y2="436" stroke="#c0c0c0" stroke-width="0.7" />
<text x="588.5" y="442.2" font-size="6.6" fill="#e8e8e8" textLength="21.5" lengthAdjust="spacingAndGlyphs" stroke="#e8e8e8" stroke-width="0.2" >3 Aug 06:00</text>
<line x1="618.3" y1="433.5" x2="618.3" y2="436" stroke="#c0c0c0" stroke-width="0.7" />
<text x="618.5" y="442.2" font-size="6.6" fill="#e8e8e8" textLength="21.5" lengthAdjust="spacingAndGlyphs" stroke="#e8e8e8" stroke-width="0.2" >3 Aug 22:00</text>
<rect x="270" y="436" width="37.5" height="8.2" fill="#ff0000" />
<text x="271.5" y="442" font-size="6.6" fill="#000000" textLength="34.5" lengthAdjust="spacingAndGlyphs" stroke="#000000" stroke-width="0.2" >2020.07.23 14:00</text>
<rect x="106.8" y="447" width="533.2" height="14.3" fill="#f0f0f0" />
<line x1="107" y1="447.3" x2="640" y2="447.3" stroke="#a0a0a0" stroke-width="0.6" />
<text x="113.5" y="457.6" font-size="8.2" fill="#808080" textLength="30" lengthAdjust="spacingAndGlyphs" stroke="#808080" stroke-width="0.22" >USDCHF,H1</text>
<text x="153.5" y="457.6" font-size="8.2" fill="#808080" textLength="28.8" lengthAdjust="spacingAndGlyphs" stroke="#808080" stroke-width="0.22" >EURGBP,H1</text>
<text x="193" y="457.6" font-size="8.2" fill="#808080" textLength="27.5" lengthAdjust="spacingAndGlyphs" stroke="#808080" stroke-width="0.22" >USDJPY,H1</text>
<text x="230.5" y="457.6" font-size="8.2" fill="#808080" textLength="28.5" lengthAdjust="spacingAndGlyphs" stroke="#808080" stroke-width="0.22" >EURGBP,H1</text>
<text x="269.5" y="457.6" font-size="8.2" fill="#808080" textLength="30" lengthAdjust="spacingAndGlyphs" stroke="#808080" stroke-width="0.22" >USDCHF,H1</text>
<text x="309.5" y="457.6" font-size="8.2" fill="#808080" textLength="28.5" lengthAdjust="spacingAndGlyphs" stroke="#808080" stroke-width="0.22" >EURUSD,H1</text>
<line x1="148.5" y1="450" x2="148.5" y2="459" stroke="#a0a0a0" stroke-width="0.7" />
<line x1="187.3" y1="450" x2="187.3" y2="459" stroke="#a0a0a0" stroke-width="0.7" />
<line x1="225.5" y1="450" x2="225.5" y2="459" stroke="#a0a0a0" stroke-width="0.7" />
<line x1="264.8" y1="450" x2="264.8" y2="459" stroke="#a0a0a0" stroke-width="0.7" />
<line x1="304.5" y1="450" x2="304.5" y2="459" stroke="#a0a0a0" stroke-width="0.7" />
<rect x="343.8" y="446.8" width="40" height="14" fill="#ffffff" stroke="#505050" stroke-width="0.8"/>
<rect x="344.3" y="446" width="39" height="1.2" fill="#000000" />
<text x="349.5" y="457.6" font-size="8.2" fill="#202020" textLength="28" lengthAdjust="spacingAndGlyphs" stroke="#202020" stroke-width="0.22" >NZDJPY,H1</text>
<path d="M626 452.5 l-1.8 1.8 1.8 1.8" fill="none" stroke="#808080" stroke-width="0.7"/><path d="M633.5 452.5 l1.8 1.8 -1.8 1.8" fill="none" stroke="#808080" stroke-width="0.7"/>
<line x1="106.5" y1="447" x2="106.5" y2="461" stroke="#707070" stroke-width="0.8" />
<rect x="0" y="461.3" width="640" height="16" fill="#f0f0f0" />
<line x1="0" y1="461.5" x2="640" y2="461.5" stroke="#d8d8d8" stroke-width="0.6" />
<text x="0" y="472.6" font-size="8.2" fill="#202020" textLength="45" lengthAdjust="spacingAndGlyphs" stroke="#202020" stroke-width="0.22" >Per aiuto, premi F1</text>
<line x1="305" y1="463" x2="305" y2="476" stroke="#c0c0c0" stroke-width="0.8" />
<line x1="359.5" y1="463" x2="359.5" y2="476" stroke="#c0c0c0" stroke-width="0.8" />
<line x1="407.5" y1="463" x2="407.5" y2="476" stroke="#c0c0c0" stroke-width="0.8" />
<line x1="441" y1="463" x2="441" y2="476" stroke="#c0c0c0" stroke-width="0.8" />
<line x1="474" y1="463" x2="474" y2="476" stroke="#c0c0c0" stroke-width="0.8" />
<line x1="507" y1="463" x2="507" y2="476" stroke="#c0c0c0" stroke-width="0.8" />
<line x1="539.5" y1="463" x2="539.5" y2="476" stroke="#c0c0c0" stroke-width="0.8" />
<line x1="570.5" y1="463" x2="570.5" y2="476" stroke="#c0c0c0" stroke-width="0.8" />
<text x="308" y="472.6" font-size="8.2" fill="#202020" textLength="18" lengthAdjust="spacingAndGlyphs" stroke="#202020" stroke-width="0.22" >Default</text>
<rect x="572.8" y="466.5" width="2.2" height="8" fill="#6a9a30" />
<rect x="575.5" y="466.5" width="2.2" height="8" fill="#6a9a30" />
<rect x="578.1999999999999" y="466.5" width="2.2" height="8" fill="#2a6aa8" />
<rect x="580.9" y="466.5" width="2.2" height="8" fill="#2a6aa8" />
<path d="M572.8 474.5 l10.5 -8 v8z" fill="#1f5a90"/>
<text x="585.6" y="473" font-size="8.2" fill="#202020" textLength="26.4" lengthAdjust="spacingAndGlyphs" stroke="#202020" stroke-width="0.22" >14320/2 kb</text>
<rect x="0" y="477" width="640" height="3" fill="#2a2e33" />
<rect x="21" y="477" width="162" height="3" fill="#f0f0f0" />
<rect x="366.5" y="477" width="23.5" height="3" fill="#5a5e63" />
</svg></body></html>
